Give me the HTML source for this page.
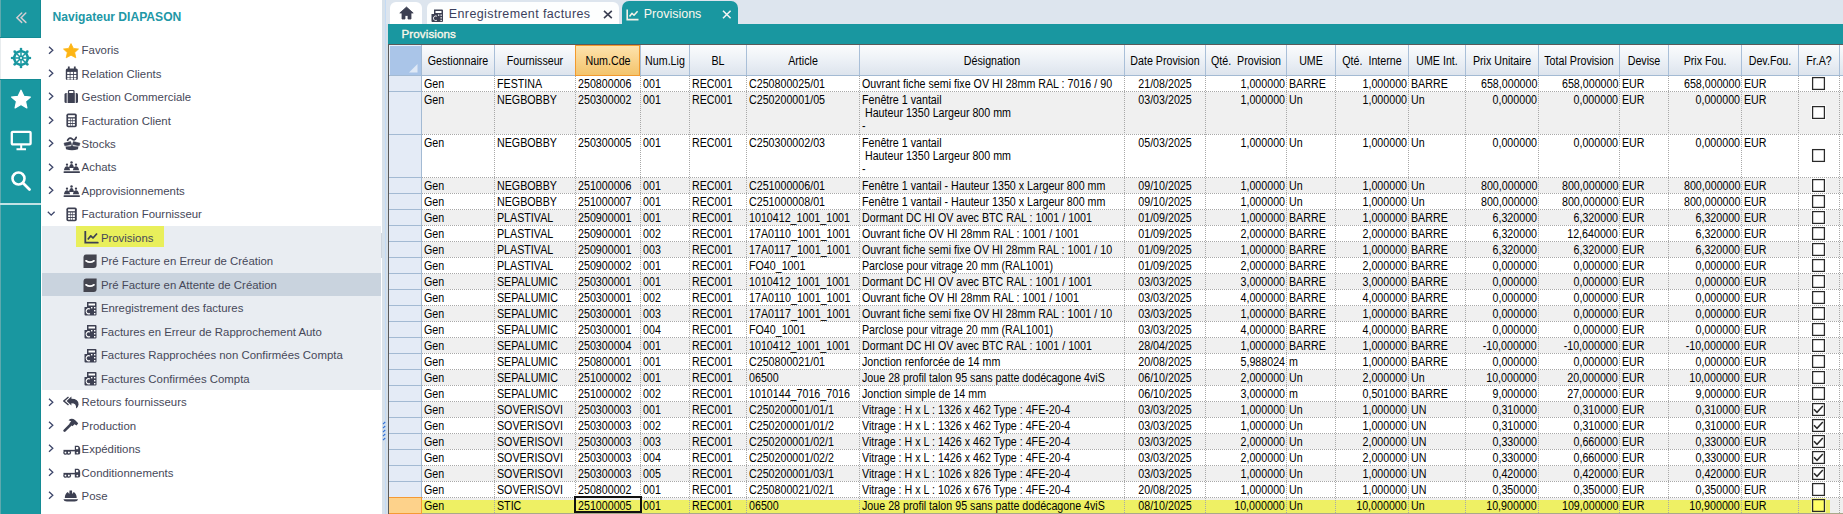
<!DOCTYPE html><html><head><meta charset="utf-8"><style>*{margin:0;padding:0;box-sizing:border-box}
html,body{width:1843px;height:514px;overflow:hidden;background:#fff}
body{position:relative;font-family:"Liberation Sans",sans-serif}
.a{position:absolute}
.t{position:absolute;white-space:pre;font-size:12px;line-height:13px;color:#000}
.c{position:absolute;overflow:hidden}
.s{display:inline-block;white-space:pre;transform-origin:0 0}
.nav{position:absolute;white-space:pre;font-size:11.4px;color:#464859;line-height:14px}
</style></head><body><div class="a" style="left:382px;top:0;width:1461px;height:24px;background:#dde5ee"></div><div class="a" style="left:382px;top:0;width:3px;height:514px;background:#d7e1ea"></div><div class="a" style="left:385px;top:0;width:1px;height:514px;background:#c4dbf5"></div><div class="a" style="left:386px;top:24px;width:2px;height:490px;background:#d5dfe8"></div><div class="a" style="left:388px;top:24px;width:1455px;height:20px;background:#1997a0"></div><div class="a" style="left:401.5px;top:26.6px;font:11.6px/14px 'Liberation Sans',sans-serif;letter-spacing:0.1px;-webkit-text-stroke:0.35px #fbf7ea;color:#fbf7ea;white-space:pre">Provisions</div><div class="a" style="left:388px;top:44px;width:1455px;height:1px;background:#5a5a5a"></div><div class="a" style="left:388px;top:44px;width:1px;height:470px;background:#5a5a5a"></div><div class="a" style="left:389px;top:45px;width:1454px;height:30px;background:linear-gradient(#fbfcfd,#eef2f7 45%,#dde4ed)"></div><div class="a" style="left:389px;top:75px;width:1454px;height:1px;background:#a3bad3"></div><div class="a" style="left:389px;top:45px;width:32px;height:30px;background:#aac5e8;border-left:1px solid #e8f0fa;border-top:1px solid #e8f0fa"></div><svg class="a" style="left:409px;top:64px" width="9" height="9"><path d="M8.5 0 L8.5 8.5 L0 8.5 Z" fill="#dfe9f6"/></svg><div class="a" style="left:389px;top:76px;width:32px;height:438px;background:#e4ebf6"></div><div class="a" style="left:421px;top:45px;width:1px;height:469px;background:#a3bad3"></div><div class="a" style="left:575px;top:45px;width:65px;height:31px;background:linear-gradient(#fde3ad,#f9d38c 50%,#f3c46c);border:1px solid #f29a2e"></div><div class="a" style="left:494px;top:45px;width:1px;height:30px;background:#a9bfd8"></div><div class="a" style="left:640px;top:45px;width:1px;height:30px;background:#a9bfd8"></div><div class="a" style="left:689px;top:45px;width:1px;height:30px;background:#a9bfd8"></div><div class="a" style="left:746px;top:45px;width:1px;height:30px;background:#a9bfd8"></div><div class="a" style="left:859px;top:45px;width:1px;height:30px;background:#a9bfd8"></div><div class="a" style="left:1124px;top:45px;width:1px;height:30px;background:#a9bfd8"></div><div class="a" style="left:1205px;top:45px;width:1px;height:30px;background:#a9bfd8"></div><div class="a" style="left:1286px;top:45px;width:1px;height:30px;background:#a9bfd8"></div><div class="a" style="left:1335px;top:45px;width:1px;height:30px;background:#a9bfd8"></div><div class="a" style="left:1408px;top:45px;width:1px;height:30px;background:#a9bfd8"></div><div class="a" style="left:1465px;top:45px;width:1px;height:30px;background:#a9bfd8"></div><div class="a" style="left:1538px;top:45px;width:1px;height:30px;background:#a9bfd8"></div><div class="a" style="left:1619px;top:45px;width:1px;height:30px;background:#a9bfd8"></div><div class="a" style="left:1668px;top:45px;width:1px;height:30px;background:#a9bfd8"></div><div class="a" style="left:1741px;top:45px;width:1px;height:30px;background:#a9bfd8"></div><div class="a" style="left:1798px;top:45px;width:1px;height:30px;background:#a9bfd8"></div><div class="a" style="left:1839px;top:45px;width:1px;height:30px;background:#a9bfd8"></div><div class="a" style="left:1840px;top:45px;width:3px;height:30px;background:linear-gradient(#fbfcfd,#dde4ed)"></div><div class="c" style="left:422px;top:45px;width:72px;height:30px"><div class="t" style="left:0;width:80.89887640449439px;top:9.5px;text-align:center;transform:scaleX(0.89);transform-origin:0 0">Gestionnaire</div></div><div class="c" style="left:495px;top:45px;width:80px;height:30px"><div class="t" style="left:0;width:89.8876404494382px;top:9.5px;text-align:center;transform:scaleX(0.89);transform-origin:0 0">Fournisseur</div></div><div class="c" style="left:576px;top:45px;width:64px;height:30px"><div class="t" style="left:0;width:71.91011235955057px;top:9.5px;text-align:center;transform:scaleX(0.89);transform-origin:0 0">Num.Cde</div></div><div class="c" style="left:641px;top:45px;width:48px;height:30px"><div class="t" style="left:0;width:53.93258426966292px;top:9.5px;text-align:center;transform:scaleX(0.89);transform-origin:0 0">Num.Lig</div></div><div class="c" style="left:690px;top:45px;width:56px;height:30px"><div class="t" style="left:0;width:62.92134831460674px;top:9.5px;text-align:center;transform:scaleX(0.89);transform-origin:0 0">BL</div></div><div class="c" style="left:747px;top:45px;width:112px;height:30px"><div class="t" style="left:0;width:125.84269662921348px;top:9.5px;text-align:center;transform:scaleX(0.89);transform-origin:0 0">Article</div></div><div class="c" style="left:860px;top:45px;width:264px;height:30px"><div class="t" style="left:0;width:296.6292134831461px;top:9.5px;text-align:center;transform:scaleX(0.89);transform-origin:0 0">Désignation</div></div><div class="c" style="left:1125px;top:45px;width:80px;height:30px"><div class="t" style="left:0;width:89.8876404494382px;top:9.5px;text-align:center;transform:scaleX(0.89);transform-origin:0 0">Date Provision</div></div><div class="c" style="left:1206px;top:45px;width:80px;height:30px"><div class="t" style="left:0;width:89.8876404494382px;top:9.5px;text-align:center;transform:scaleX(0.89);transform-origin:0 0">Qté.  Provision</div></div><div class="c" style="left:1287px;top:45px;width:48px;height:30px"><div class="t" style="left:0;width:53.93258426966292px;top:9.5px;text-align:center;transform:scaleX(0.89);transform-origin:0 0">UME</div></div><div class="c" style="left:1336px;top:45px;width:72px;height:30px"><div class="t" style="left:0;width:80.89887640449439px;top:9.5px;text-align:center;transform:scaleX(0.89);transform-origin:0 0">Qté.  Interne</div></div><div class="c" style="left:1409px;top:45px;width:56px;height:30px"><div class="t" style="left:0;width:62.92134831460674px;top:9.5px;text-align:center;transform:scaleX(0.89);transform-origin:0 0">UME Int.</div></div><div class="c" style="left:1466px;top:45px;width:72px;height:30px"><div class="t" style="left:0;width:80.89887640449439px;top:9.5px;text-align:center;transform:scaleX(0.89);transform-origin:0 0">Prix Unitaire</div></div><div class="c" style="left:1539px;top:45px;width:80px;height:30px"><div class="t" style="left:0;width:89.8876404494382px;top:9.5px;text-align:center;transform:scaleX(0.89);transform-origin:0 0">Total Provision</div></div><div class="c" style="left:1620px;top:45px;width:48px;height:30px"><div class="t" style="left:0;width:53.93258426966292px;top:9.5px;text-align:center;transform:scaleX(0.89);transform-origin:0 0">Devise</div></div><div class="c" style="left:1669px;top:45px;width:72px;height:30px"><div class="t" style="left:0;width:80.89887640449439px;top:9.5px;text-align:center;transform:scaleX(0.89);transform-origin:0 0">Prix Fou.</div></div><div class="c" style="left:1742px;top:45px;width:56px;height:30px"><div class="t" style="left:0;width:62.92134831460674px;top:9.5px;text-align:center;transform:scaleX(0.89);transform-origin:0 0">Dev.Fou.</div></div><div class="c" style="left:1799px;top:45px;width:40px;height:30px"><div class="t" style="left:0;width:44.9438202247191px;top:9.5px;text-align:center;transform:scaleX(0.89);transform-origin:0 0">Fr.A?</div></div><div class="a" style="left:422px;top:76px;width:1421px;height:15px;background:#ffffff"></div><div class="a" style="left:422px;top:91px;width:1421px;height:1px;background:repeating-linear-gradient(90deg,#a8a8a8 0 1px,transparent 1px 2px)"></div><div class="a" style="left:389px;top:91px;width:32px;height:1px;background:#a3bad3"></div><div class="a" style="left:422px;top:92px;width:1421px;height:42px;background:#f0f0f0"></div><div class="a" style="left:422px;top:134px;width:1421px;height:1px;background:repeating-linear-gradient(90deg,#a8a8a8 0 1px,transparent 1px 2px)"></div><div class="a" style="left:389px;top:134px;width:32px;height:1px;background:#a3bad3"></div><div class="a" style="left:422px;top:135px;width:1421px;height:42px;background:#ffffff"></div><div class="a" style="left:422px;top:177px;width:1421px;height:1px;background:repeating-linear-gradient(90deg,#a8a8a8 0 1px,transparent 1px 2px)"></div><div class="a" style="left:389px;top:177px;width:32px;height:1px;background:#a3bad3"></div><div class="a" style="left:422px;top:178px;width:1421px;height:15px;background:#f0f0f0"></div><div class="a" style="left:422px;top:193px;width:1421px;height:1px;background:repeating-linear-gradient(90deg,#a8a8a8 0 1px,transparent 1px 2px)"></div><div class="a" style="left:389px;top:193px;width:32px;height:1px;background:#a3bad3"></div><div class="a" style="left:422px;top:194px;width:1421px;height:15px;background:#ffffff"></div><div class="a" style="left:422px;top:209px;width:1421px;height:1px;background:repeating-linear-gradient(90deg,#a8a8a8 0 1px,transparent 1px 2px)"></div><div class="a" style="left:389px;top:209px;width:32px;height:1px;background:#a3bad3"></div><div class="a" style="left:422px;top:210px;width:1421px;height:15px;background:#f0f0f0"></div><div class="a" style="left:422px;top:225px;width:1421px;height:1px;background:repeating-linear-gradient(90deg,#a8a8a8 0 1px,transparent 1px 2px)"></div><div class="a" style="left:389px;top:225px;width:32px;height:1px;background:#a3bad3"></div><div class="a" style="left:422px;top:226px;width:1421px;height:15px;background:#ffffff"></div><div class="a" style="left:422px;top:241px;width:1421px;height:1px;background:repeating-linear-gradient(90deg,#a8a8a8 0 1px,transparent 1px 2px)"></div><div class="a" style="left:389px;top:241px;width:32px;height:1px;background:#a3bad3"></div><div class="a" style="left:422px;top:242px;width:1421px;height:15px;background:#f0f0f0"></div><div class="a" style="left:422px;top:257px;width:1421px;height:1px;background:repeating-linear-gradient(90deg,#a8a8a8 0 1px,transparent 1px 2px)"></div><div class="a" style="left:389px;top:257px;width:32px;height:1px;background:#a3bad3"></div><div class="a" style="left:422px;top:258px;width:1421px;height:15px;background:#ffffff"></div><div class="a" style="left:422px;top:273px;width:1421px;height:1px;background:repeating-linear-gradient(90deg,#a8a8a8 0 1px,transparent 1px 2px)"></div><div class="a" style="left:389px;top:273px;width:32px;height:1px;background:#a3bad3"></div><div class="a" style="left:422px;top:274px;width:1421px;height:15px;background:#f0f0f0"></div><div class="a" style="left:422px;top:289px;width:1421px;height:1px;background:repeating-linear-gradient(90deg,#a8a8a8 0 1px,transparent 1px 2px)"></div><div class="a" style="left:389px;top:289px;width:32px;height:1px;background:#a3bad3"></div><div class="a" style="left:422px;top:290px;width:1421px;height:15px;background:#ffffff"></div><div class="a" style="left:422px;top:305px;width:1421px;height:1px;background:repeating-linear-gradient(90deg,#a8a8a8 0 1px,transparent 1px 2px)"></div><div class="a" style="left:389px;top:305px;width:32px;height:1px;background:#a3bad3"></div><div class="a" style="left:422px;top:306px;width:1421px;height:15px;background:#f0f0f0"></div><div class="a" style="left:422px;top:321px;width:1421px;height:1px;background:repeating-linear-gradient(90deg,#a8a8a8 0 1px,transparent 1px 2px)"></div><div class="a" style="left:389px;top:321px;width:32px;height:1px;background:#a3bad3"></div><div class="a" style="left:422px;top:322px;width:1421px;height:15px;background:#ffffff"></div><div class="a" style="left:422px;top:337px;width:1421px;height:1px;background:repeating-linear-gradient(90deg,#a8a8a8 0 1px,transparent 1px 2px)"></div><div class="a" style="left:389px;top:337px;width:32px;height:1px;background:#a3bad3"></div><div class="a" style="left:422px;top:338px;width:1421px;height:15px;background:#f0f0f0"></div><div class="a" style="left:422px;top:353px;width:1421px;height:1px;background:repeating-linear-gradient(90deg,#a8a8a8 0 1px,transparent 1px 2px)"></div><div class="a" style="left:389px;top:353px;width:32px;height:1px;background:#a3bad3"></div><div class="a" style="left:422px;top:354px;width:1421px;height:15px;background:#ffffff"></div><div class="a" style="left:422px;top:369px;width:1421px;height:1px;background:repeating-linear-gradient(90deg,#a8a8a8 0 1px,transparent 1px 2px)"></div><div class="a" style="left:389px;top:369px;width:32px;height:1px;background:#a3bad3"></div><div class="a" style="left:422px;top:370px;width:1421px;height:15px;background:#f0f0f0"></div><div class="a" style="left:422px;top:385px;width:1421px;height:1px;background:repeating-linear-gradient(90deg,#a8a8a8 0 1px,transparent 1px 2px)"></div><div class="a" style="left:389px;top:385px;width:32px;height:1px;background:#a3bad3"></div><div class="a" style="left:422px;top:386px;width:1421px;height:15px;background:#ffffff"></div><div class="a" style="left:422px;top:401px;width:1421px;height:1px;background:repeating-linear-gradient(90deg,#a8a8a8 0 1px,transparent 1px 2px)"></div><div class="a" style="left:389px;top:401px;width:32px;height:1px;background:#a3bad3"></div><div class="a" style="left:422px;top:402px;width:1421px;height:15px;background:#f0f0f0"></div><div class="a" style="left:422px;top:417px;width:1421px;height:1px;background:repeating-linear-gradient(90deg,#a8a8a8 0 1px,transparent 1px 2px)"></div><div class="a" style="left:389px;top:417px;width:32px;height:1px;background:#a3bad3"></div><div class="a" style="left:422px;top:418px;width:1421px;height:15px;background:#ffffff"></div><div class="a" style="left:422px;top:433px;width:1421px;height:1px;background:repeating-linear-gradient(90deg,#a8a8a8 0 1px,transparent 1px 2px)"></div><div class="a" style="left:389px;top:433px;width:32px;height:1px;background:#a3bad3"></div><div class="a" style="left:422px;top:434px;width:1421px;height:15px;background:#f0f0f0"></div><div class="a" style="left:422px;top:449px;width:1421px;height:1px;background:repeating-linear-gradient(90deg,#a8a8a8 0 1px,transparent 1px 2px)"></div><div class="a" style="left:389px;top:449px;width:32px;height:1px;background:#a3bad3"></div><div class="a" style="left:422px;top:450px;width:1421px;height:15px;background:#ffffff"></div><div class="a" style="left:422px;top:465px;width:1421px;height:1px;background:repeating-linear-gradient(90deg,#a8a8a8 0 1px,transparent 1px 2px)"></div><div class="a" style="left:389px;top:465px;width:32px;height:1px;background:#a3bad3"></div><div class="a" style="left:422px;top:466px;width:1421px;height:15px;background:#f0f0f0"></div><div class="a" style="left:422px;top:481px;width:1421px;height:1px;background:repeating-linear-gradient(90deg,#a8a8a8 0 1px,transparent 1px 2px)"></div><div class="a" style="left:389px;top:481px;width:32px;height:1px;background:#a3bad3"></div><div class="a" style="left:422px;top:482px;width:1421px;height:15px;background:#ffffff"></div><div class="a" style="left:422px;top:497px;width:1421px;height:1px;background:repeating-linear-gradient(90deg,#a8a8a8 0 1px,transparent 1px 2px)"></div><div class="a" style="left:389px;top:497px;width:32px;height:1px;background:#a3bad3"></div><div class="a" style="left:422px;top:498px;width:1421px;height:16px;background:#efefef"></div><div class="a" style="left:422px;top:500px;width:1408px;height:13px;background:#eef064"></div><div class="a" style="left:422px;top:513px;width:1421px;height:1px;background:#a9a98a"></div><div class="a" style="left:389px;top:497px;width:33px;height:17px;background:#fdd28b;border:1px solid #f59a34;border-left:none"></div><div class="a" style="left:494px;top:76px;width:1px;height:438px;background:repeating-linear-gradient(180deg,#a8a8a8 0 1px,transparent 1px 2px)"></div><div class="a" style="left:575px;top:76px;width:1px;height:438px;background:repeating-linear-gradient(180deg,#a8a8a8 0 1px,transparent 1px 2px)"></div><div class="a" style="left:640px;top:76px;width:1px;height:438px;background:repeating-linear-gradient(180deg,#a8a8a8 0 1px,transparent 1px 2px)"></div><div class="a" style="left:689px;top:76px;width:1px;height:438px;background:repeating-linear-gradient(180deg,#a8a8a8 0 1px,transparent 1px 2px)"></div><div class="a" style="left:746px;top:76px;width:1px;height:438px;background:repeating-linear-gradient(180deg,#a8a8a8 0 1px,transparent 1px 2px)"></div><div class="a" style="left:859px;top:76px;width:1px;height:438px;background:repeating-linear-gradient(180deg,#a8a8a8 0 1px,transparent 1px 2px)"></div><div class="a" style="left:1124px;top:76px;width:1px;height:438px;background:repeating-linear-gradient(180deg,#a8a8a8 0 1px,transparent 1px 2px)"></div><div class="a" style="left:1205px;top:76px;width:1px;height:438px;background:repeating-linear-gradient(180deg,#a8a8a8 0 1px,transparent 1px 2px)"></div><div class="a" style="left:1286px;top:76px;width:1px;height:438px;background:repeating-linear-gradient(180deg,#a8a8a8 0 1px,transparent 1px 2px)"></div><div class="a" style="left:1335px;top:76px;width:1px;height:438px;background:repeating-linear-gradient(180deg,#a8a8a8 0 1px,transparent 1px 2px)"></div><div class="a" style="left:1408px;top:76px;width:1px;height:438px;background:repeating-linear-gradient(180deg,#a8a8a8 0 1px,transparent 1px 2px)"></div><div class="a" style="left:1465px;top:76px;width:1px;height:438px;background:repeating-linear-gradient(180deg,#a8a8a8 0 1px,transparent 1px 2px)"></div><div class="a" style="left:1538px;top:76px;width:1px;height:438px;background:repeating-linear-gradient(180deg,#a8a8a8 0 1px,transparent 1px 2px)"></div><div class="a" style="left:1619px;top:76px;width:1px;height:438px;background:repeating-linear-gradient(180deg,#a8a8a8 0 1px,transparent 1px 2px)"></div><div class="a" style="left:1668px;top:76px;width:1px;height:438px;background:repeating-linear-gradient(180deg,#a8a8a8 0 1px,transparent 1px 2px)"></div><div class="a" style="left:1741px;top:76px;width:1px;height:438px;background:repeating-linear-gradient(180deg,#a8a8a8 0 1px,transparent 1px 2px)"></div><div class="a" style="left:1798px;top:76px;width:1px;height:438px;background:repeating-linear-gradient(180deg,#a8a8a8 0 1px,transparent 1px 2px)"></div><div class="a" style="left:1839px;top:76px;width:1px;height:438px;background:repeating-linear-gradient(180deg,#a8a8a8 0 1px,transparent 1px 2px)"></div><div class="c" style="left:422px;top:76px;width:72px;height:15px"><div class="t" style="left:2px;top:2.4px;transform:scaleX(0.89);transform-origin:0 0">Gen</div></div><div class="c" style="left:495px;top:76px;width:80px;height:15px"><div class="t" style="left:2px;top:2.4px;transform:scaleX(0.89);transform-origin:0 0">FESTINA</div></div><div class="c" style="left:576px;top:76px;width:64px;height:15px"><div class="t" style="left:2px;top:2.4px;transform:scaleX(0.89);transform-origin:0 0">250800006</div></div><div class="c" style="left:641px;top:76px;width:48px;height:15px"><div class="t" style="left:2px;top:2.4px;transform:scaleX(0.89);transform-origin:0 0">001</div></div><div class="c" style="left:690px;top:76px;width:56px;height:15px"><div class="t" style="left:2px;top:2.4px;transform:scaleX(0.89);transform-origin:0 0">REC001</div></div><div class="c" style="left:747px;top:76px;width:112px;height:15px"><div class="t" style="left:2px;top:2.4px;transform:scaleX(0.89);transform-origin:0 0">C250800025/01</div></div><div class="c" style="left:860px;top:76px;width:264px;height:15px"><div class="t" style="left:2px;top:2.4px;transform:scaleX(0.89);transform-origin:0 0">Ouvrant fiche semi fixe OV HI 28mm RAL : 7016 / 90</div></div><div class="c" style="left:1125px;top:76px;width:80px;height:15px"><div class="t" style="left:0;width:80px;top:2.4px;text-align:center;transform:scaleX(0.89);transform-origin:50% 0">21/08/2025</div></div><div class="c" style="left:1206px;top:76px;width:80px;height:15px"><div class="t" style="right:1px;top:2.4px;transform:scaleX(0.89);transform-origin:100% 0">1,000000</div></div><div class="c" style="left:1287px;top:76px;width:48px;height:15px"><div class="t" style="left:2px;top:2.4px;transform:scaleX(0.89);transform-origin:0 0">BARRE</div></div><div class="c" style="left:1336px;top:76px;width:72px;height:15px"><div class="t" style="right:1px;top:2.4px;transform:scaleX(0.89);transform-origin:100% 0">1,000000</div></div><div class="c" style="left:1409px;top:76px;width:56px;height:15px"><div class="t" style="left:2px;top:2.4px;transform:scaleX(0.89);transform-origin:0 0">BARRE</div></div><div class="c" style="left:1466px;top:76px;width:72px;height:15px"><div class="t" style="right:1px;top:2.4px;transform:scaleX(0.89);transform-origin:100% 0">658,000000</div></div><div class="c" style="left:1539px;top:76px;width:80px;height:15px"><div class="t" style="right:1px;top:2.4px;transform:scaleX(0.89);transform-origin:100% 0">658,000000</div></div><div class="c" style="left:1620px;top:76px;width:48px;height:15px"><div class="t" style="left:2px;top:2.4px;transform:scaleX(0.89);transform-origin:0 0">EUR</div></div><div class="c" style="left:1669px;top:76px;width:72px;height:15px"><div class="t" style="right:1px;top:2.4px;transform:scaleX(0.89);transform-origin:100% 0">658,000000</div></div><div class="c" style="left:1742px;top:76px;width:56px;height:15px"><div class="t" style="left:2px;top:2.4px;transform:scaleX(0.89);transform-origin:0 0">EUR</div></div><svg class="a" style="left:1811px;top:76px" width="15" height="15"><rect x="0" y="0" width="15" height="15" fill="#fff"/><rect x="1.6" y="1.6" width="11.8" height="11.8" fill="#fff" stroke="#2a2a2a" stroke-width="1.25"/></svg><div class="c" style="left:422px;top:92px;width:72px;height:42px"><div class="t" style="left:2px;top:2.4px;transform:scaleX(0.89);transform-origin:0 0">Gen</div></div><div class="c" style="left:495px;top:92px;width:80px;height:42px"><div class="t" style="left:2px;top:2.4px;transform:scaleX(0.89);transform-origin:0 0">NEGBOBBY</div></div><div class="c" style="left:576px;top:92px;width:64px;height:42px"><div class="t" style="left:2px;top:2.4px;transform:scaleX(0.89);transform-origin:0 0">250300002</div></div><div class="c" style="left:641px;top:92px;width:48px;height:42px"><div class="t" style="left:2px;top:2.4px;transform:scaleX(0.89);transform-origin:0 0">001</div></div><div class="c" style="left:690px;top:92px;width:56px;height:42px"><div class="t" style="left:2px;top:2.4px;transform:scaleX(0.89);transform-origin:0 0">REC001</div></div><div class="c" style="left:747px;top:92px;width:112px;height:42px"><div class="t" style="left:2px;top:2.4px;transform:scaleX(0.89);transform-origin:0 0">C250200001/05</div></div><div class="c" style="left:860px;top:92px;width:264px;height:42px"><div class="t" style="left:2px;top:2.4px;transform:scaleX(0.89);transform-origin:0 0">Fenêtre 1 vantail
 Hauteur 1350 Largeur 800 mm
-</div></div><div class="c" style="left:1125px;top:92px;width:80px;height:42px"><div class="t" style="left:0;width:80px;top:2.4px;text-align:center;transform:scaleX(0.89);transform-origin:50% 0">03/03/2025</div></div><div class="c" style="left:1206px;top:92px;width:80px;height:42px"><div class="t" style="right:1px;top:2.4px;transform:scaleX(0.89);transform-origin:100% 0">1,000000</div></div><div class="c" style="left:1287px;top:92px;width:48px;height:42px"><div class="t" style="left:2px;top:2.4px;transform:scaleX(0.89);transform-origin:0 0">Un</div></div><div class="c" style="left:1336px;top:92px;width:72px;height:42px"><div class="t" style="right:1px;top:2.4px;transform:scaleX(0.89);transform-origin:100% 0">1,000000</div></div><div class="c" style="left:1409px;top:92px;width:56px;height:42px"><div class="t" style="left:2px;top:2.4px;transform:scaleX(0.89);transform-origin:0 0">Un</div></div><div class="c" style="left:1466px;top:92px;width:72px;height:42px"><div class="t" style="right:1px;top:2.4px;transform:scaleX(0.89);transform-origin:100% 0">0,000000</div></div><div class="c" style="left:1539px;top:92px;width:80px;height:42px"><div class="t" style="right:1px;top:2.4px;transform:scaleX(0.89);transform-origin:100% 0">0,000000</div></div><div class="c" style="left:1620px;top:92px;width:48px;height:42px"><div class="t" style="left:2px;top:2.4px;transform:scaleX(0.89);transform-origin:0 0">EUR</div></div><div class="c" style="left:1669px;top:92px;width:72px;height:42px"><div class="t" style="right:1px;top:2.4px;transform:scaleX(0.89);transform-origin:100% 0">0,000000</div></div><div class="c" style="left:1742px;top:92px;width:56px;height:42px"><div class="t" style="left:2px;top:2.4px;transform:scaleX(0.89);transform-origin:0 0">EUR</div></div><svg class="a" style="left:1811px;top:105px" width="15" height="15"><rect x="0" y="0" width="15" height="15" fill="#fff"/><rect x="1.6" y="1.6" width="11.8" height="11.8" fill="#fff" stroke="#2a2a2a" stroke-width="1.25"/></svg><div class="c" style="left:422px;top:135px;width:72px;height:42px"><div class="t" style="left:2px;top:2.4px;transform:scaleX(0.89);transform-origin:0 0">Gen</div></div><div class="c" style="left:495px;top:135px;width:80px;height:42px"><div class="t" style="left:2px;top:2.4px;transform:scaleX(0.89);transform-origin:0 0">NEGBOBBY</div></div><div class="c" style="left:576px;top:135px;width:64px;height:42px"><div class="t" style="left:2px;top:2.4px;transform:scaleX(0.89);transform-origin:0 0">250300005</div></div><div class="c" style="left:641px;top:135px;width:48px;height:42px"><div class="t" style="left:2px;top:2.4px;transform:scaleX(0.89);transform-origin:0 0">001</div></div><div class="c" style="left:690px;top:135px;width:56px;height:42px"><div class="t" style="left:2px;top:2.4px;transform:scaleX(0.89);transform-origin:0 0">REC001</div></div><div class="c" style="left:747px;top:135px;width:112px;height:42px"><div class="t" style="left:2px;top:2.4px;transform:scaleX(0.89);transform-origin:0 0">C250300002/03</div></div><div class="c" style="left:860px;top:135px;width:264px;height:42px"><div class="t" style="left:2px;top:2.4px;transform:scaleX(0.89);transform-origin:0 0">Fenêtre 1 vantail
 Hauteur 1350 Largeur 800 mm
-</div></div><div class="c" style="left:1125px;top:135px;width:80px;height:42px"><div class="t" style="left:0;width:80px;top:2.4px;text-align:center;transform:scaleX(0.89);transform-origin:50% 0">05/03/2025</div></div><div class="c" style="left:1206px;top:135px;width:80px;height:42px"><div class="t" style="right:1px;top:2.4px;transform:scaleX(0.89);transform-origin:100% 0">1,000000</div></div><div class="c" style="left:1287px;top:135px;width:48px;height:42px"><div class="t" style="left:2px;top:2.4px;transform:scaleX(0.89);transform-origin:0 0">Un</div></div><div class="c" style="left:1336px;top:135px;width:72px;height:42px"><div class="t" style="right:1px;top:2.4px;transform:scaleX(0.89);transform-origin:100% 0">1,000000</div></div><div class="c" style="left:1409px;top:135px;width:56px;height:42px"><div class="t" style="left:2px;top:2.4px;transform:scaleX(0.89);transform-origin:0 0">Un</div></div><div class="c" style="left:1466px;top:135px;width:72px;height:42px"><div class="t" style="right:1px;top:2.4px;transform:scaleX(0.89);transform-origin:100% 0">0,000000</div></div><div class="c" style="left:1539px;top:135px;width:80px;height:42px"><div class="t" style="right:1px;top:2.4px;transform:scaleX(0.89);transform-origin:100% 0">0,000000</div></div><div class="c" style="left:1620px;top:135px;width:48px;height:42px"><div class="t" style="left:2px;top:2.4px;transform:scaleX(0.89);transform-origin:0 0">EUR</div></div><div class="c" style="left:1669px;top:135px;width:72px;height:42px"><div class="t" style="right:1px;top:2.4px;transform:scaleX(0.89);transform-origin:100% 0">0,000000</div></div><div class="c" style="left:1742px;top:135px;width:56px;height:42px"><div class="t" style="left:2px;top:2.4px;transform:scaleX(0.89);transform-origin:0 0">EUR</div></div><svg class="a" style="left:1811px;top:148px" width="15" height="15"><rect x="0" y="0" width="15" height="15" fill="#fff"/><rect x="1.6" y="1.6" width="11.8" height="11.8" fill="#fff" stroke="#2a2a2a" stroke-width="1.25"/></svg><div class="c" style="left:422px;top:178px;width:72px;height:15px"><div class="t" style="left:2px;top:2.4px;transform:scaleX(0.89);transform-origin:0 0">Gen</div></div><div class="c" style="left:495px;top:178px;width:80px;height:15px"><div class="t" style="left:2px;top:2.4px;transform:scaleX(0.89);transform-origin:0 0">NEGBOBBY</div></div><div class="c" style="left:576px;top:178px;width:64px;height:15px"><div class="t" style="left:2px;top:2.4px;transform:scaleX(0.89);transform-origin:0 0">251000006</div></div><div class="c" style="left:641px;top:178px;width:48px;height:15px"><div class="t" style="left:2px;top:2.4px;transform:scaleX(0.89);transform-origin:0 0">001</div></div><div class="c" style="left:690px;top:178px;width:56px;height:15px"><div class="t" style="left:2px;top:2.4px;transform:scaleX(0.89);transform-origin:0 0">REC001</div></div><div class="c" style="left:747px;top:178px;width:112px;height:15px"><div class="t" style="left:2px;top:2.4px;transform:scaleX(0.89);transform-origin:0 0">C251000006/01</div></div><div class="c" style="left:860px;top:178px;width:264px;height:15px"><div class="t" style="left:2px;top:2.4px;transform:scaleX(0.89);transform-origin:0 0">Fenêtre 1 vantail - Hauteur 1350 x Largeur 800 mm</div></div><div class="c" style="left:1125px;top:178px;width:80px;height:15px"><div class="t" style="left:0;width:80px;top:2.4px;text-align:center;transform:scaleX(0.89);transform-origin:50% 0">09/10/2025</div></div><div class="c" style="left:1206px;top:178px;width:80px;height:15px"><div class="t" style="right:1px;top:2.4px;transform:scaleX(0.89);transform-origin:100% 0">1,000000</div></div><div class="c" style="left:1287px;top:178px;width:48px;height:15px"><div class="t" style="left:2px;top:2.4px;transform:scaleX(0.89);transform-origin:0 0">Un</div></div><div class="c" style="left:1336px;top:178px;width:72px;height:15px"><div class="t" style="right:1px;top:2.4px;transform:scaleX(0.89);transform-origin:100% 0">1,000000</div></div><div class="c" style="left:1409px;top:178px;width:56px;height:15px"><div class="t" style="left:2px;top:2.4px;transform:scaleX(0.89);transform-origin:0 0">Un</div></div><div class="c" style="left:1466px;top:178px;width:72px;height:15px"><div class="t" style="right:1px;top:2.4px;transform:scaleX(0.89);transform-origin:100% 0">800,000000</div></div><div class="c" style="left:1539px;top:178px;width:80px;height:15px"><div class="t" style="right:1px;top:2.4px;transform:scaleX(0.89);transform-origin:100% 0">800,000000</div></div><div class="c" style="left:1620px;top:178px;width:48px;height:15px"><div class="t" style="left:2px;top:2.4px;transform:scaleX(0.89);transform-origin:0 0">EUR</div></div><div class="c" style="left:1669px;top:178px;width:72px;height:15px"><div class="t" style="right:1px;top:2.4px;transform:scaleX(0.89);transform-origin:100% 0">800,000000</div></div><div class="c" style="left:1742px;top:178px;width:56px;height:15px"><div class="t" style="left:2px;top:2.4px;transform:scaleX(0.89);transform-origin:0 0">EUR</div></div><svg class="a" style="left:1811px;top:178px" width="15" height="15"><rect x="0" y="0" width="15" height="15" fill="#fff"/><rect x="1.6" y="1.6" width="11.8" height="11.8" fill="#fff" stroke="#2a2a2a" stroke-width="1.25"/></svg><div class="c" style="left:422px;top:194px;width:72px;height:15px"><div class="t" style="left:2px;top:2.4px;transform:scaleX(0.89);transform-origin:0 0">Gen</div></div><div class="c" style="left:495px;top:194px;width:80px;height:15px"><div class="t" style="left:2px;top:2.4px;transform:scaleX(0.89);transform-origin:0 0">NEGBOBBY</div></div><div class="c" style="left:576px;top:194px;width:64px;height:15px"><div class="t" style="left:2px;top:2.4px;transform:scaleX(0.89);transform-origin:0 0">251000007</div></div><div class="c" style="left:641px;top:194px;width:48px;height:15px"><div class="t" style="left:2px;top:2.4px;transform:scaleX(0.89);transform-origin:0 0">001</div></div><div class="c" style="left:690px;top:194px;width:56px;height:15px"><div class="t" style="left:2px;top:2.4px;transform:scaleX(0.89);transform-origin:0 0">REC001</div></div><div class="c" style="left:747px;top:194px;width:112px;height:15px"><div class="t" style="left:2px;top:2.4px;transform:scaleX(0.89);transform-origin:0 0">C251000008/01</div></div><div class="c" style="left:860px;top:194px;width:264px;height:15px"><div class="t" style="left:2px;top:2.4px;transform:scaleX(0.89);transform-origin:0 0">Fenêtre 1 vantail - Hauteur 1350 x Largeur 800 mm</div></div><div class="c" style="left:1125px;top:194px;width:80px;height:15px"><div class="t" style="left:0;width:80px;top:2.4px;text-align:center;transform:scaleX(0.89);transform-origin:50% 0">09/10/2025</div></div><div class="c" style="left:1206px;top:194px;width:80px;height:15px"><div class="t" style="right:1px;top:2.4px;transform:scaleX(0.89);transform-origin:100% 0">1,000000</div></div><div class="c" style="left:1287px;top:194px;width:48px;height:15px"><div class="t" style="left:2px;top:2.4px;transform:scaleX(0.89);transform-origin:0 0">Un</div></div><div class="c" style="left:1336px;top:194px;width:72px;height:15px"><div class="t" style="right:1px;top:2.4px;transform:scaleX(0.89);transform-origin:100% 0">1,000000</div></div><div class="c" style="left:1409px;top:194px;width:56px;height:15px"><div class="t" style="left:2px;top:2.4px;transform:scaleX(0.89);transform-origin:0 0">Un</div></div><div class="c" style="left:1466px;top:194px;width:72px;height:15px"><div class="t" style="right:1px;top:2.4px;transform:scaleX(0.89);transform-origin:100% 0">800,000000</div></div><div class="c" style="left:1539px;top:194px;width:80px;height:15px"><div class="t" style="right:1px;top:2.4px;transform:scaleX(0.89);transform-origin:100% 0">800,000000</div></div><div class="c" style="left:1620px;top:194px;width:48px;height:15px"><div class="t" style="left:2px;top:2.4px;transform:scaleX(0.89);transform-origin:0 0">EUR</div></div><div class="c" style="left:1669px;top:194px;width:72px;height:15px"><div class="t" style="right:1px;top:2.4px;transform:scaleX(0.89);transform-origin:100% 0">800,000000</div></div><div class="c" style="left:1742px;top:194px;width:56px;height:15px"><div class="t" style="left:2px;top:2.4px;transform:scaleX(0.89);transform-origin:0 0">EUR</div></div><svg class="a" style="left:1811px;top:194px" width="15" height="15"><rect x="0" y="0" width="15" height="15" fill="#fff"/><rect x="1.6" y="1.6" width="11.8" height="11.8" fill="#fff" stroke="#2a2a2a" stroke-width="1.25"/></svg><div class="c" style="left:422px;top:210px;width:72px;height:15px"><div class="t" style="left:2px;top:2.4px;transform:scaleX(0.89);transform-origin:0 0">Gen</div></div><div class="c" style="left:495px;top:210px;width:80px;height:15px"><div class="t" style="left:2px;top:2.4px;transform:scaleX(0.89);transform-origin:0 0">PLASTIVAL</div></div><div class="c" style="left:576px;top:210px;width:64px;height:15px"><div class="t" style="left:2px;top:2.4px;transform:scaleX(0.89);transform-origin:0 0">250900001</div></div><div class="c" style="left:641px;top:210px;width:48px;height:15px"><div class="t" style="left:2px;top:2.4px;transform:scaleX(0.89);transform-origin:0 0">001</div></div><div class="c" style="left:690px;top:210px;width:56px;height:15px"><div class="t" style="left:2px;top:2.4px;transform:scaleX(0.89);transform-origin:0 0">REC001</div></div><div class="c" style="left:747px;top:210px;width:112px;height:15px"><div class="t" style="left:2px;top:2.4px;transform:scaleX(0.89);transform-origin:0 0">1010412_1001_1001</div></div><div class="c" style="left:860px;top:210px;width:264px;height:15px"><div class="t" style="left:2px;top:2.4px;transform:scaleX(0.89);transform-origin:0 0">Dormant DC HI OV avec BTC RAL : 1001 / 1001</div></div><div class="c" style="left:1125px;top:210px;width:80px;height:15px"><div class="t" style="left:0;width:80px;top:2.4px;text-align:center;transform:scaleX(0.89);transform-origin:50% 0">01/09/2025</div></div><div class="c" style="left:1206px;top:210px;width:80px;height:15px"><div class="t" style="right:1px;top:2.4px;transform:scaleX(0.89);transform-origin:100% 0">1,000000</div></div><div class="c" style="left:1287px;top:210px;width:48px;height:15px"><div class="t" style="left:2px;top:2.4px;transform:scaleX(0.89);transform-origin:0 0">BARRE</div></div><div class="c" style="left:1336px;top:210px;width:72px;height:15px"><div class="t" style="right:1px;top:2.4px;transform:scaleX(0.89);transform-origin:100% 0">1,000000</div></div><div class="c" style="left:1409px;top:210px;width:56px;height:15px"><div class="t" style="left:2px;top:2.4px;transform:scaleX(0.89);transform-origin:0 0">BARRE</div></div><div class="c" style="left:1466px;top:210px;width:72px;height:15px"><div class="t" style="right:1px;top:2.4px;transform:scaleX(0.89);transform-origin:100% 0">6,320000</div></div><div class="c" style="left:1539px;top:210px;width:80px;height:15px"><div class="t" style="right:1px;top:2.4px;transform:scaleX(0.89);transform-origin:100% 0">6,320000</div></div><div class="c" style="left:1620px;top:210px;width:48px;height:15px"><div class="t" style="left:2px;top:2.4px;transform:scaleX(0.89);transform-origin:0 0">EUR</div></div><div class="c" style="left:1669px;top:210px;width:72px;height:15px"><div class="t" style="right:1px;top:2.4px;transform:scaleX(0.89);transform-origin:100% 0">6,320000</div></div><div class="c" style="left:1742px;top:210px;width:56px;height:15px"><div class="t" style="left:2px;top:2.4px;transform:scaleX(0.89);transform-origin:0 0">EUR</div></div><svg class="a" style="left:1811px;top:210px" width="15" height="15"><rect x="0" y="0" width="15" height="15" fill="#fff"/><rect x="1.6" y="1.6" width="11.8" height="11.8" fill="#fff" stroke="#2a2a2a" stroke-width="1.25"/></svg><div class="c" style="left:422px;top:226px;width:72px;height:15px"><div class="t" style="left:2px;top:2.4px;transform:scaleX(0.89);transform-origin:0 0">Gen</div></div><div class="c" style="left:495px;top:226px;width:80px;height:15px"><div class="t" style="left:2px;top:2.4px;transform:scaleX(0.89);transform-origin:0 0">PLASTIVAL</div></div><div class="c" style="left:576px;top:226px;width:64px;height:15px"><div class="t" style="left:2px;top:2.4px;transform:scaleX(0.89);transform-origin:0 0">250900001</div></div><div class="c" style="left:641px;top:226px;width:48px;height:15px"><div class="t" style="left:2px;top:2.4px;transform:scaleX(0.89);transform-origin:0 0">002</div></div><div class="c" style="left:690px;top:226px;width:56px;height:15px"><div class="t" style="left:2px;top:2.4px;transform:scaleX(0.89);transform-origin:0 0">REC001</div></div><div class="c" style="left:747px;top:226px;width:112px;height:15px"><div class="t" style="left:2px;top:2.4px;transform:scaleX(0.89);transform-origin:0 0">17A0110_1001_1001</div></div><div class="c" style="left:860px;top:226px;width:264px;height:15px"><div class="t" style="left:2px;top:2.4px;transform:scaleX(0.89);transform-origin:0 0">Ouvrant fiche OV HI 28mm RAL : 1001 / 1001</div></div><div class="c" style="left:1125px;top:226px;width:80px;height:15px"><div class="t" style="left:0;width:80px;top:2.4px;text-align:center;transform:scaleX(0.89);transform-origin:50% 0">01/09/2025</div></div><div class="c" style="left:1206px;top:226px;width:80px;height:15px"><div class="t" style="right:1px;top:2.4px;transform:scaleX(0.89);transform-origin:100% 0">2,000000</div></div><div class="c" style="left:1287px;top:226px;width:48px;height:15px"><div class="t" style="left:2px;top:2.4px;transform:scaleX(0.89);transform-origin:0 0">BARRE</div></div><div class="c" style="left:1336px;top:226px;width:72px;height:15px"><div class="t" style="right:1px;top:2.4px;transform:scaleX(0.89);transform-origin:100% 0">2,000000</div></div><div class="c" style="left:1409px;top:226px;width:56px;height:15px"><div class="t" style="left:2px;top:2.4px;transform:scaleX(0.89);transform-origin:0 0">BARRE</div></div><div class="c" style="left:1466px;top:226px;width:72px;height:15px"><div class="t" style="right:1px;top:2.4px;transform:scaleX(0.89);transform-origin:100% 0">6,320000</div></div><div class="c" style="left:1539px;top:226px;width:80px;height:15px"><div class="t" style="right:1px;top:2.4px;transform:scaleX(0.89);transform-origin:100% 0">12,640000</div></div><div class="c" style="left:1620px;top:226px;width:48px;height:15px"><div class="t" style="left:2px;top:2.4px;transform:scaleX(0.89);transform-origin:0 0">EUR</div></div><div class="c" style="left:1669px;top:226px;width:72px;height:15px"><div class="t" style="right:1px;top:2.4px;transform:scaleX(0.89);transform-origin:100% 0">6,320000</div></div><div class="c" style="left:1742px;top:226px;width:56px;height:15px"><div class="t" style="left:2px;top:2.4px;transform:scaleX(0.89);transform-origin:0 0">EUR</div></div><svg class="a" style="left:1811px;top:226px" width="15" height="15"><rect x="0" y="0" width="15" height="15" fill="#fff"/><rect x="1.6" y="1.6" width="11.8" height="11.8" fill="#fff" stroke="#2a2a2a" stroke-width="1.25"/></svg><div class="c" style="left:422px;top:242px;width:72px;height:15px"><div class="t" style="left:2px;top:2.4px;transform:scaleX(0.89);transform-origin:0 0">Gen</div></div><div class="c" style="left:495px;top:242px;width:80px;height:15px"><div class="t" style="left:2px;top:2.4px;transform:scaleX(0.89);transform-origin:0 0">PLASTIVAL</div></div><div class="c" style="left:576px;top:242px;width:64px;height:15px"><div class="t" style="left:2px;top:2.4px;transform:scaleX(0.89);transform-origin:0 0">250900001</div></div><div class="c" style="left:641px;top:242px;width:48px;height:15px"><div class="t" style="left:2px;top:2.4px;transform:scaleX(0.89);transform-origin:0 0">003</div></div><div class="c" style="left:690px;top:242px;width:56px;height:15px"><div class="t" style="left:2px;top:2.4px;transform:scaleX(0.89);transform-origin:0 0">REC001</div></div><div class="c" style="left:747px;top:242px;width:112px;height:15px"><div class="t" style="left:2px;top:2.4px;transform:scaleX(0.89);transform-origin:0 0">17A0117_1001_1001</div></div><div class="c" style="left:860px;top:242px;width:264px;height:15px"><div class="t" style="left:2px;top:2.4px;transform:scaleX(0.89);transform-origin:0 0">Ouvrant fiche semi fixe OV HI 28mm RAL : 1001 / 10</div></div><div class="c" style="left:1125px;top:242px;width:80px;height:15px"><div class="t" style="left:0;width:80px;top:2.4px;text-align:center;transform:scaleX(0.89);transform-origin:50% 0">01/09/2025</div></div><div class="c" style="left:1206px;top:242px;width:80px;height:15px"><div class="t" style="right:1px;top:2.4px;transform:scaleX(0.89);transform-origin:100% 0">1,000000</div></div><div class="c" style="left:1287px;top:242px;width:48px;height:15px"><div class="t" style="left:2px;top:2.4px;transform:scaleX(0.89);transform-origin:0 0">BARRE</div></div><div class="c" style="left:1336px;top:242px;width:72px;height:15px"><div class="t" style="right:1px;top:2.4px;transform:scaleX(0.89);transform-origin:100% 0">1,000000</div></div><div class="c" style="left:1409px;top:242px;width:56px;height:15px"><div class="t" style="left:2px;top:2.4px;transform:scaleX(0.89);transform-origin:0 0">BARRE</div></div><div class="c" style="left:1466px;top:242px;width:72px;height:15px"><div class="t" style="right:1px;top:2.4px;transform:scaleX(0.89);transform-origin:100% 0">6,320000</div></div><div class="c" style="left:1539px;top:242px;width:80px;height:15px"><div class="t" style="right:1px;top:2.4px;transform:scaleX(0.89);transform-origin:100% 0">6,320000</div></div><div class="c" style="left:1620px;top:242px;width:48px;height:15px"><div class="t" style="left:2px;top:2.4px;transform:scaleX(0.89);transform-origin:0 0">EUR</div></div><div class="c" style="left:1669px;top:242px;width:72px;height:15px"><div class="t" style="right:1px;top:2.4px;transform:scaleX(0.89);transform-origin:100% 0">6,320000</div></div><div class="c" style="left:1742px;top:242px;width:56px;height:15px"><div class="t" style="left:2px;top:2.4px;transform:scaleX(0.89);transform-origin:0 0">EUR</div></div><svg class="a" style="left:1811px;top:242px" width="15" height="15"><rect x="0" y="0" width="15" height="15" fill="#fff"/><rect x="1.6" y="1.6" width="11.8" height="11.8" fill="#fff" stroke="#2a2a2a" stroke-width="1.25"/></svg><div class="c" style="left:422px;top:258px;width:72px;height:15px"><div class="t" style="left:2px;top:2.4px;transform:scaleX(0.89);transform-origin:0 0">Gen</div></div><div class="c" style="left:495px;top:258px;width:80px;height:15px"><div class="t" style="left:2px;top:2.4px;transform:scaleX(0.89);transform-origin:0 0">PLASTIVAL</div></div><div class="c" style="left:576px;top:258px;width:64px;height:15px"><div class="t" style="left:2px;top:2.4px;transform:scaleX(0.89);transform-origin:0 0">250900002</div></div><div class="c" style="left:641px;top:258px;width:48px;height:15px"><div class="t" style="left:2px;top:2.4px;transform:scaleX(0.89);transform-origin:0 0">001</div></div><div class="c" style="left:690px;top:258px;width:56px;height:15px"><div class="t" style="left:2px;top:2.4px;transform:scaleX(0.89);transform-origin:0 0">REC001</div></div><div class="c" style="left:747px;top:258px;width:112px;height:15px"><div class="t" style="left:2px;top:2.4px;transform:scaleX(0.89);transform-origin:0 0">FO40_1001</div></div><div class="c" style="left:860px;top:258px;width:264px;height:15px"><div class="t" style="left:2px;top:2.4px;transform:scaleX(0.89);transform-origin:0 0">Parclose pour vitrage 20 mm (RAL1001)</div></div><div class="c" style="left:1125px;top:258px;width:80px;height:15px"><div class="t" style="left:0;width:80px;top:2.4px;text-align:center;transform:scaleX(0.89);transform-origin:50% 0">01/09/2025</div></div><div class="c" style="left:1206px;top:258px;width:80px;height:15px"><div class="t" style="right:1px;top:2.4px;transform:scaleX(0.89);transform-origin:100% 0">2,000000</div></div><div class="c" style="left:1287px;top:258px;width:48px;height:15px"><div class="t" style="left:2px;top:2.4px;transform:scaleX(0.89);transform-origin:0 0">BARRE</div></div><div class="c" style="left:1336px;top:258px;width:72px;height:15px"><div class="t" style="right:1px;top:2.4px;transform:scaleX(0.89);transform-origin:100% 0">2,000000</div></div><div class="c" style="left:1409px;top:258px;width:56px;height:15px"><div class="t" style="left:2px;top:2.4px;transform:scaleX(0.89);transform-origin:0 0">BARRE</div></div><div class="c" style="left:1466px;top:258px;width:72px;height:15px"><div class="t" style="right:1px;top:2.4px;transform:scaleX(0.89);transform-origin:100% 0">0,000000</div></div><div class="c" style="left:1539px;top:258px;width:80px;height:15px"><div class="t" style="right:1px;top:2.4px;transform:scaleX(0.89);transform-origin:100% 0">0,000000</div></div><div class="c" style="left:1620px;top:258px;width:48px;height:15px"><div class="t" style="left:2px;top:2.4px;transform:scaleX(0.89);transform-origin:0 0">EUR</div></div><div class="c" style="left:1669px;top:258px;width:72px;height:15px"><div class="t" style="right:1px;top:2.4px;transform:scaleX(0.89);transform-origin:100% 0">0,000000</div></div><div class="c" style="left:1742px;top:258px;width:56px;height:15px"><div class="t" style="left:2px;top:2.4px;transform:scaleX(0.89);transform-origin:0 0">EUR</div></div><svg class="a" style="left:1811px;top:258px" width="15" height="15"><rect x="0" y="0" width="15" height="15" fill="#fff"/><rect x="1.6" y="1.6" width="11.8" height="11.8" fill="#fff" stroke="#2a2a2a" stroke-width="1.25"/></svg><div class="c" style="left:422px;top:274px;width:72px;height:15px"><div class="t" style="left:2px;top:2.4px;transform:scaleX(0.89);transform-origin:0 0">Gen</div></div><div class="c" style="left:495px;top:274px;width:80px;height:15px"><div class="t" style="left:2px;top:2.4px;transform:scaleX(0.89);transform-origin:0 0">SEPALUMIC</div></div><div class="c" style="left:576px;top:274px;width:64px;height:15px"><div class="t" style="left:2px;top:2.4px;transform:scaleX(0.89);transform-origin:0 0">250300001</div></div><div class="c" style="left:641px;top:274px;width:48px;height:15px"><div class="t" style="left:2px;top:2.4px;transform:scaleX(0.89);transform-origin:0 0">001</div></div><div class="c" style="left:690px;top:274px;width:56px;height:15px"><div class="t" style="left:2px;top:2.4px;transform:scaleX(0.89);transform-origin:0 0">REC001</div></div><div class="c" style="left:747px;top:274px;width:112px;height:15px"><div class="t" style="left:2px;top:2.4px;transform:scaleX(0.89);transform-origin:0 0">1010412_1001_1001</div></div><div class="c" style="left:860px;top:274px;width:264px;height:15px"><div class="t" style="left:2px;top:2.4px;transform:scaleX(0.89);transform-origin:0 0">Dormant DC HI OV avec BTC RAL : 1001 / 1001</div></div><div class="c" style="left:1125px;top:274px;width:80px;height:15px"><div class="t" style="left:0;width:80px;top:2.4px;text-align:center;transform:scaleX(0.89);transform-origin:50% 0">03/03/2025</div></div><div class="c" style="left:1206px;top:274px;width:80px;height:15px"><div class="t" style="right:1px;top:2.4px;transform:scaleX(0.89);transform-origin:100% 0">3,000000</div></div><div class="c" style="left:1287px;top:274px;width:48px;height:15px"><div class="t" style="left:2px;top:2.4px;transform:scaleX(0.89);transform-origin:0 0">BARRE</div></div><div class="c" style="left:1336px;top:274px;width:72px;height:15px"><div class="t" style="right:1px;top:2.4px;transform:scaleX(0.89);transform-origin:100% 0">3,000000</div></div><div class="c" style="left:1409px;top:274px;width:56px;height:15px"><div class="t" style="left:2px;top:2.4px;transform:scaleX(0.89);transform-origin:0 0">BARRE</div></div><div class="c" style="left:1466px;top:274px;width:72px;height:15px"><div class="t" style="right:1px;top:2.4px;transform:scaleX(0.89);transform-origin:100% 0">0,000000</div></div><div class="c" style="left:1539px;top:274px;width:80px;height:15px"><div class="t" style="right:1px;top:2.4px;transform:scaleX(0.89);transform-origin:100% 0">0,000000</div></div><div class="c" style="left:1620px;top:274px;width:48px;height:15px"><div class="t" style="left:2px;top:2.4px;transform:scaleX(0.89);transform-origin:0 0">EUR</div></div><div class="c" style="left:1669px;top:274px;width:72px;height:15px"><div class="t" style="right:1px;top:2.4px;transform:scaleX(0.89);transform-origin:100% 0">0,000000</div></div><div class="c" style="left:1742px;top:274px;width:56px;height:15px"><div class="t" style="left:2px;top:2.4px;transform:scaleX(0.89);transform-origin:0 0">EUR</div></div><svg class="a" style="left:1811px;top:274px" width="15" height="15"><rect x="0" y="0" width="15" height="15" fill="#fff"/><rect x="1.6" y="1.6" width="11.8" height="11.8" fill="#fff" stroke="#2a2a2a" stroke-width="1.25"/></svg><div class="c" style="left:422px;top:290px;width:72px;height:15px"><div class="t" style="left:2px;top:2.4px;transform:scaleX(0.89);transform-origin:0 0">Gen</div></div><div class="c" style="left:495px;top:290px;width:80px;height:15px"><div class="t" style="left:2px;top:2.4px;transform:scaleX(0.89);transform-origin:0 0">SEPALUMIC</div></div><div class="c" style="left:576px;top:290px;width:64px;height:15px"><div class="t" style="left:2px;top:2.4px;transform:scaleX(0.89);transform-origin:0 0">250300001</div></div><div class="c" style="left:641px;top:290px;width:48px;height:15px"><div class="t" style="left:2px;top:2.4px;transform:scaleX(0.89);transform-origin:0 0">002</div></div><div class="c" style="left:690px;top:290px;width:56px;height:15px"><div class="t" style="left:2px;top:2.4px;transform:scaleX(0.89);transform-origin:0 0">REC001</div></div><div class="c" style="left:747px;top:290px;width:112px;height:15px"><div class="t" style="left:2px;top:2.4px;transform:scaleX(0.89);transform-origin:0 0">17A0110_1001_1001</div></div><div class="c" style="left:860px;top:290px;width:264px;height:15px"><div class="t" style="left:2px;top:2.4px;transform:scaleX(0.89);transform-origin:0 0">Ouvrant fiche OV HI 28mm RAL : 1001 / 1001</div></div><div class="c" style="left:1125px;top:290px;width:80px;height:15px"><div class="t" style="left:0;width:80px;top:2.4px;text-align:center;transform:scaleX(0.89);transform-origin:50% 0">03/03/2025</div></div><div class="c" style="left:1206px;top:290px;width:80px;height:15px"><div class="t" style="right:1px;top:2.4px;transform:scaleX(0.89);transform-origin:100% 0">4,000000</div></div><div class="c" style="left:1287px;top:290px;width:48px;height:15px"><div class="t" style="left:2px;top:2.4px;transform:scaleX(0.89);transform-origin:0 0">BARRE</div></div><div class="c" style="left:1336px;top:290px;width:72px;height:15px"><div class="t" style="right:1px;top:2.4px;transform:scaleX(0.89);transform-origin:100% 0">4,000000</div></div><div class="c" style="left:1409px;top:290px;width:56px;height:15px"><div class="t" style="left:2px;top:2.4px;transform:scaleX(0.89);transform-origin:0 0">BARRE</div></div><div class="c" style="left:1466px;top:290px;width:72px;height:15px"><div class="t" style="right:1px;top:2.4px;transform:scaleX(0.89);transform-origin:100% 0">0,000000</div></div><div class="c" style="left:1539px;top:290px;width:80px;height:15px"><div class="t" style="right:1px;top:2.4px;transform:scaleX(0.89);transform-origin:100% 0">0,000000</div></div><div class="c" style="left:1620px;top:290px;width:48px;height:15px"><div class="t" style="left:2px;top:2.4px;transform:scaleX(0.89);transform-origin:0 0">EUR</div></div><div class="c" style="left:1669px;top:290px;width:72px;height:15px"><div class="t" style="right:1px;top:2.4px;transform:scaleX(0.89);transform-origin:100% 0">0,000000</div></div><div class="c" style="left:1742px;top:290px;width:56px;height:15px"><div class="t" style="left:2px;top:2.4px;transform:scaleX(0.89);transform-origin:0 0">EUR</div></div><svg class="a" style="left:1811px;top:290px" width="15" height="15"><rect x="0" y="0" width="15" height="15" fill="#fff"/><rect x="1.6" y="1.6" width="11.8" height="11.8" fill="#fff" stroke="#2a2a2a" stroke-width="1.25"/></svg><div class="c" style="left:422px;top:306px;width:72px;height:15px"><div class="t" style="left:2px;top:2.4px;transform:scaleX(0.89);transform-origin:0 0">Gen</div></div><div class="c" style="left:495px;top:306px;width:80px;height:15px"><div class="t" style="left:2px;top:2.4px;transform:scaleX(0.89);transform-origin:0 0">SEPALUMIC</div></div><div class="c" style="left:576px;top:306px;width:64px;height:15px"><div class="t" style="left:2px;top:2.4px;transform:scaleX(0.89);transform-origin:0 0">250300001</div></div><div class="c" style="left:641px;top:306px;width:48px;height:15px"><div class="t" style="left:2px;top:2.4px;transform:scaleX(0.89);transform-origin:0 0">003</div></div><div class="c" style="left:690px;top:306px;width:56px;height:15px"><div class="t" style="left:2px;top:2.4px;transform:scaleX(0.89);transform-origin:0 0">REC001</div></div><div class="c" style="left:747px;top:306px;width:112px;height:15px"><div class="t" style="left:2px;top:2.4px;transform:scaleX(0.89);transform-origin:0 0">17A0117_1001_1001</div></div><div class="c" style="left:860px;top:306px;width:264px;height:15px"><div class="t" style="left:2px;top:2.4px;transform:scaleX(0.89);transform-origin:0 0">Ouvrant fiche semi fixe OV HI 28mm RAL : 1001 / 10</div></div><div class="c" style="left:1125px;top:306px;width:80px;height:15px"><div class="t" style="left:0;width:80px;top:2.4px;text-align:center;transform:scaleX(0.89);transform-origin:50% 0">03/03/2025</div></div><div class="c" style="left:1206px;top:306px;width:80px;height:15px"><div class="t" style="right:1px;top:2.4px;transform:scaleX(0.89);transform-origin:100% 0">1,000000</div></div><div class="c" style="left:1287px;top:306px;width:48px;height:15px"><div class="t" style="left:2px;top:2.4px;transform:scaleX(0.89);transform-origin:0 0">BARRE</div></div><div class="c" style="left:1336px;top:306px;width:72px;height:15px"><div class="t" style="right:1px;top:2.4px;transform:scaleX(0.89);transform-origin:100% 0">1,000000</div></div><div class="c" style="left:1409px;top:306px;width:56px;height:15px"><div class="t" style="left:2px;top:2.4px;transform:scaleX(0.89);transform-origin:0 0">BARRE</div></div><div class="c" style="left:1466px;top:306px;width:72px;height:15px"><div class="t" style="right:1px;top:2.4px;transform:scaleX(0.89);transform-origin:100% 0">0,000000</div></div><div class="c" style="left:1539px;top:306px;width:80px;height:15px"><div class="t" style="right:1px;top:2.4px;transform:scaleX(0.89);transform-origin:100% 0">0,000000</div></div><div class="c" style="left:1620px;top:306px;width:48px;height:15px"><div class="t" style="left:2px;top:2.4px;transform:scaleX(0.89);transform-origin:0 0">EUR</div></div><div class="c" style="left:1669px;top:306px;width:72px;height:15px"><div class="t" style="right:1px;top:2.4px;transform:scaleX(0.89);transform-origin:100% 0">0,000000</div></div><div class="c" style="left:1742px;top:306px;width:56px;height:15px"><div class="t" style="left:2px;top:2.4px;transform:scaleX(0.89);transform-origin:0 0">EUR</div></div><svg class="a" style="left:1811px;top:306px" width="15" height="15"><rect x="0" y="0" width="15" height="15" fill="#fff"/><rect x="1.6" y="1.6" width="11.8" height="11.8" fill="#fff" stroke="#2a2a2a" stroke-width="1.25"/></svg><div class="c" style="left:422px;top:322px;width:72px;height:15px"><div class="t" style="left:2px;top:2.4px;transform:scaleX(0.89);transform-origin:0 0">Gen</div></div><div class="c" style="left:495px;top:322px;width:80px;height:15px"><div class="t" style="left:2px;top:2.4px;transform:scaleX(0.89);transform-origin:0 0">SEPALUMIC</div></div><div class="c" style="left:576px;top:322px;width:64px;height:15px"><div class="t" style="left:2px;top:2.4px;transform:scaleX(0.89);transform-origin:0 0">250300001</div></div><div class="c" style="left:641px;top:322px;width:48px;height:15px"><div class="t" style="left:2px;top:2.4px;transform:scaleX(0.89);transform-origin:0 0">004</div></div><div class="c" style="left:690px;top:322px;width:56px;height:15px"><div class="t" style="left:2px;top:2.4px;transform:scaleX(0.89);transform-origin:0 0">REC001</div></div><div class="c" style="left:747px;top:322px;width:112px;height:15px"><div class="t" style="left:2px;top:2.4px;transform:scaleX(0.89);transform-origin:0 0">FO40_1001</div></div><div class="c" style="left:860px;top:322px;width:264px;height:15px"><div class="t" style="left:2px;top:2.4px;transform:scaleX(0.89);transform-origin:0 0">Parclose pour vitrage 20 mm (RAL1001)</div></div><div class="c" style="left:1125px;top:322px;width:80px;height:15px"><div class="t" style="left:0;width:80px;top:2.4px;text-align:center;transform:scaleX(0.89);transform-origin:50% 0">03/03/2025</div></div><div class="c" style="left:1206px;top:322px;width:80px;height:15px"><div class="t" style="right:1px;top:2.4px;transform:scaleX(0.89);transform-origin:100% 0">4,000000</div></div><div class="c" style="left:1287px;top:322px;width:48px;height:15px"><div class="t" style="left:2px;top:2.4px;transform:scaleX(0.89);transform-origin:0 0">BARRE</div></div><div class="c" style="left:1336px;top:322px;width:72px;height:15px"><div class="t" style="right:1px;top:2.4px;transform:scaleX(0.89);transform-origin:100% 0">4,000000</div></div><div class="c" style="left:1409px;top:322px;width:56px;height:15px"><div class="t" style="left:2px;top:2.4px;transform:scaleX(0.89);transform-origin:0 0">BARRE</div></div><div class="c" style="left:1466px;top:322px;width:72px;height:15px"><div class="t" style="right:1px;top:2.4px;transform:scaleX(0.89);transform-origin:100% 0">0,000000</div></div><div class="c" style="left:1539px;top:322px;width:80px;height:15px"><div class="t" style="right:1px;top:2.4px;transform:scaleX(0.89);transform-origin:100% 0">0,000000</div></div><div class="c" style="left:1620px;top:322px;width:48px;height:15px"><div class="t" style="left:2px;top:2.4px;transform:scaleX(0.89);transform-origin:0 0">EUR</div></div><div class="c" style="left:1669px;top:322px;width:72px;height:15px"><div class="t" style="right:1px;top:2.4px;transform:scaleX(0.89);transform-origin:100% 0">0,000000</div></div><div class="c" style="left:1742px;top:322px;width:56px;height:15px"><div class="t" style="left:2px;top:2.4px;transform:scaleX(0.89);transform-origin:0 0">EUR</div></div><svg class="a" style="left:1811px;top:322px" width="15" height="15"><rect x="0" y="0" width="15" height="15" fill="#fff"/><rect x="1.6" y="1.6" width="11.8" height="11.8" fill="#fff" stroke="#2a2a2a" stroke-width="1.25"/></svg><div class="c" style="left:422px;top:338px;width:72px;height:15px"><div class="t" style="left:2px;top:2.4px;transform:scaleX(0.89);transform-origin:0 0">Gen</div></div><div class="c" style="left:495px;top:338px;width:80px;height:15px"><div class="t" style="left:2px;top:2.4px;transform:scaleX(0.89);transform-origin:0 0">SEPALUMIC</div></div><div class="c" style="left:576px;top:338px;width:64px;height:15px"><div class="t" style="left:2px;top:2.4px;transform:scaleX(0.89);transform-origin:0 0">250300004</div></div><div class="c" style="left:641px;top:338px;width:48px;height:15px"><div class="t" style="left:2px;top:2.4px;transform:scaleX(0.89);transform-origin:0 0">001</div></div><div class="c" style="left:690px;top:338px;width:56px;height:15px"><div class="t" style="left:2px;top:2.4px;transform:scaleX(0.89);transform-origin:0 0">REC001</div></div><div class="c" style="left:747px;top:338px;width:112px;height:15px"><div class="t" style="left:2px;top:2.4px;transform:scaleX(0.89);transform-origin:0 0">1010412_1001_1001</div></div><div class="c" style="left:860px;top:338px;width:264px;height:15px"><div class="t" style="left:2px;top:2.4px;transform:scaleX(0.89);transform-origin:0 0">Dormant DC HI OV avec BTC RAL : 1001 / 1001</div></div><div class="c" style="left:1125px;top:338px;width:80px;height:15px"><div class="t" style="left:0;width:80px;top:2.4px;text-align:center;transform:scaleX(0.89);transform-origin:50% 0">28/04/2025</div></div><div class="c" style="left:1206px;top:338px;width:80px;height:15px"><div class="t" style="right:1px;top:2.4px;transform:scaleX(0.89);transform-origin:100% 0">1,000000</div></div><div class="c" style="left:1287px;top:338px;width:48px;height:15px"><div class="t" style="left:2px;top:2.4px;transform:scaleX(0.89);transform-origin:0 0">BARRE</div></div><div class="c" style="left:1336px;top:338px;width:72px;height:15px"><div class="t" style="right:1px;top:2.4px;transform:scaleX(0.89);transform-origin:100% 0">1,000000</div></div><div class="c" style="left:1409px;top:338px;width:56px;height:15px"><div class="t" style="left:2px;top:2.4px;transform:scaleX(0.89);transform-origin:0 0">BARRE</div></div><div class="c" style="left:1466px;top:338px;width:72px;height:15px"><div class="t" style="right:1px;top:2.4px;transform:scaleX(0.89);transform-origin:100% 0">-10,000000</div></div><div class="c" style="left:1539px;top:338px;width:80px;height:15px"><div class="t" style="right:1px;top:2.4px;transform:scaleX(0.89);transform-origin:100% 0">-10,000000</div></div><div class="c" style="left:1620px;top:338px;width:48px;height:15px"><div class="t" style="left:2px;top:2.4px;transform:scaleX(0.89);transform-origin:0 0">EUR</div></div><div class="c" style="left:1669px;top:338px;width:72px;height:15px"><div class="t" style="right:1px;top:2.4px;transform:scaleX(0.89);transform-origin:100% 0">-10,000000</div></div><div class="c" style="left:1742px;top:338px;width:56px;height:15px"><div class="t" style="left:2px;top:2.4px;transform:scaleX(0.89);transform-origin:0 0">EUR</div></div><svg class="a" style="left:1811px;top:338px" width="15" height="15"><rect x="0" y="0" width="15" height="15" fill="#fff"/><rect x="1.6" y="1.6" width="11.8" height="11.8" fill="#fff" stroke="#2a2a2a" stroke-width="1.25"/></svg><div class="c" style="left:422px;top:354px;width:72px;height:15px"><div class="t" style="left:2px;top:2.4px;transform:scaleX(0.89);transform-origin:0 0">Gen</div></div><div class="c" style="left:495px;top:354px;width:80px;height:15px"><div class="t" style="left:2px;top:2.4px;transform:scaleX(0.89);transform-origin:0 0">SEPALUMIC</div></div><div class="c" style="left:576px;top:354px;width:64px;height:15px"><div class="t" style="left:2px;top:2.4px;transform:scaleX(0.89);transform-origin:0 0">250800001</div></div><div class="c" style="left:641px;top:354px;width:48px;height:15px"><div class="t" style="left:2px;top:2.4px;transform:scaleX(0.89);transform-origin:0 0">001</div></div><div class="c" style="left:690px;top:354px;width:56px;height:15px"><div class="t" style="left:2px;top:2.4px;transform:scaleX(0.89);transform-origin:0 0">REC001</div></div><div class="c" style="left:747px;top:354px;width:112px;height:15px"><div class="t" style="left:2px;top:2.4px;transform:scaleX(0.89);transform-origin:0 0">C250800021/01</div></div><div class="c" style="left:860px;top:354px;width:264px;height:15px"><div class="t" style="left:2px;top:2.4px;transform:scaleX(0.89);transform-origin:0 0">Jonction renforcée de 14 mm</div></div><div class="c" style="left:1125px;top:354px;width:80px;height:15px"><div class="t" style="left:0;width:80px;top:2.4px;text-align:center;transform:scaleX(0.89);transform-origin:50% 0">20/08/2025</div></div><div class="c" style="left:1206px;top:354px;width:80px;height:15px"><div class="t" style="right:1px;top:2.4px;transform:scaleX(0.89);transform-origin:100% 0">5,988024</div></div><div class="c" style="left:1287px;top:354px;width:48px;height:15px"><div class="t" style="left:2px;top:2.4px;transform:scaleX(0.89);transform-origin:0 0">m</div></div><div class="c" style="left:1336px;top:354px;width:72px;height:15px"><div class="t" style="right:1px;top:2.4px;transform:scaleX(0.89);transform-origin:100% 0">1,000000</div></div><div class="c" style="left:1409px;top:354px;width:56px;height:15px"><div class="t" style="left:2px;top:2.4px;transform:scaleX(0.89);transform-origin:0 0">BARRE</div></div><div class="c" style="left:1466px;top:354px;width:72px;height:15px"><div class="t" style="right:1px;top:2.4px;transform:scaleX(0.89);transform-origin:100% 0">0,000000</div></div><div class="c" style="left:1539px;top:354px;width:80px;height:15px"><div class="t" style="right:1px;top:2.4px;transform:scaleX(0.89);transform-origin:100% 0">0,000000</div></div><div class="c" style="left:1620px;top:354px;width:48px;height:15px"><div class="t" style="left:2px;top:2.4px;transform:scaleX(0.89);transform-origin:0 0">EUR</div></div><div class="c" style="left:1669px;top:354px;width:72px;height:15px"><div class="t" style="right:1px;top:2.4px;transform:scaleX(0.89);transform-origin:100% 0">0,000000</div></div><div class="c" style="left:1742px;top:354px;width:56px;height:15px"><div class="t" style="left:2px;top:2.4px;transform:scaleX(0.89);transform-origin:0 0">EUR</div></div><svg class="a" style="left:1811px;top:354px" width="15" height="15"><rect x="0" y="0" width="15" height="15" fill="#fff"/><rect x="1.6" y="1.6" width="11.8" height="11.8" fill="#fff" stroke="#2a2a2a" stroke-width="1.25"/></svg><div class="c" style="left:422px;top:370px;width:72px;height:15px"><div class="t" style="left:2px;top:2.4px;transform:scaleX(0.89);transform-origin:0 0">Gen</div></div><div class="c" style="left:495px;top:370px;width:80px;height:15px"><div class="t" style="left:2px;top:2.4px;transform:scaleX(0.89);transform-origin:0 0">SEPALUMIC</div></div><div class="c" style="left:576px;top:370px;width:64px;height:15px"><div class="t" style="left:2px;top:2.4px;transform:scaleX(0.89);transform-origin:0 0">251000002</div></div><div class="c" style="left:641px;top:370px;width:48px;height:15px"><div class="t" style="left:2px;top:2.4px;transform:scaleX(0.89);transform-origin:0 0">001</div></div><div class="c" style="left:690px;top:370px;width:56px;height:15px"><div class="t" style="left:2px;top:2.4px;transform:scaleX(0.89);transform-origin:0 0">REC001</div></div><div class="c" style="left:747px;top:370px;width:112px;height:15px"><div class="t" style="left:2px;top:2.4px;transform:scaleX(0.89);transform-origin:0 0">06500</div></div><div class="c" style="left:860px;top:370px;width:264px;height:15px"><div class="t" style="left:2px;top:2.4px;transform:scaleX(0.89);transform-origin:0 0">Joue 28 profil talon 95 sans patte dodécagone 4viS</div></div><div class="c" style="left:1125px;top:370px;width:80px;height:15px"><div class="t" style="left:0;width:80px;top:2.4px;text-align:center;transform:scaleX(0.89);transform-origin:50% 0">06/10/2025</div></div><div class="c" style="left:1206px;top:370px;width:80px;height:15px"><div class="t" style="right:1px;top:2.4px;transform:scaleX(0.89);transform-origin:100% 0">2,000000</div></div><div class="c" style="left:1287px;top:370px;width:48px;height:15px"><div class="t" style="left:2px;top:2.4px;transform:scaleX(0.89);transform-origin:0 0">Un</div></div><div class="c" style="left:1336px;top:370px;width:72px;height:15px"><div class="t" style="right:1px;top:2.4px;transform:scaleX(0.89);transform-origin:100% 0">2,000000</div></div><div class="c" style="left:1409px;top:370px;width:56px;height:15px"><div class="t" style="left:2px;top:2.4px;transform:scaleX(0.89);transform-origin:0 0">Un</div></div><div class="c" style="left:1466px;top:370px;width:72px;height:15px"><div class="t" style="right:1px;top:2.4px;transform:scaleX(0.89);transform-origin:100% 0">10,000000</div></div><div class="c" style="left:1539px;top:370px;width:80px;height:15px"><div class="t" style="right:1px;top:2.4px;transform:scaleX(0.89);transform-origin:100% 0">20,000000</div></div><div class="c" style="left:1620px;top:370px;width:48px;height:15px"><div class="t" style="left:2px;top:2.4px;transform:scaleX(0.89);transform-origin:0 0">EUR</div></div><div class="c" style="left:1669px;top:370px;width:72px;height:15px"><div class="t" style="right:1px;top:2.4px;transform:scaleX(0.89);transform-origin:100% 0">10,000000</div></div><div class="c" style="left:1742px;top:370px;width:56px;height:15px"><div class="t" style="left:2px;top:2.4px;transform:scaleX(0.89);transform-origin:0 0">EUR</div></div><svg class="a" style="left:1811px;top:370px" width="15" height="15"><rect x="0" y="0" width="15" height="15" fill="#fff"/><rect x="1.6" y="1.6" width="11.8" height="11.8" fill="#fff" stroke="#2a2a2a" stroke-width="1.25"/></svg><div class="c" style="left:422px;top:386px;width:72px;height:15px"><div class="t" style="left:2px;top:2.4px;transform:scaleX(0.89);transform-origin:0 0">Gen</div></div><div class="c" style="left:495px;top:386px;width:80px;height:15px"><div class="t" style="left:2px;top:2.4px;transform:scaleX(0.89);transform-origin:0 0">SEPALUMIC</div></div><div class="c" style="left:576px;top:386px;width:64px;height:15px"><div class="t" style="left:2px;top:2.4px;transform:scaleX(0.89);transform-origin:0 0">251000002</div></div><div class="c" style="left:641px;top:386px;width:48px;height:15px"><div class="t" style="left:2px;top:2.4px;transform:scaleX(0.89);transform-origin:0 0">002</div></div><div class="c" style="left:690px;top:386px;width:56px;height:15px"><div class="t" style="left:2px;top:2.4px;transform:scaleX(0.89);transform-origin:0 0">REC001</div></div><div class="c" style="left:747px;top:386px;width:112px;height:15px"><div class="t" style="left:2px;top:2.4px;transform:scaleX(0.89);transform-origin:0 0">1010144_7016_7016</div></div><div class="c" style="left:860px;top:386px;width:264px;height:15px"><div class="t" style="left:2px;top:2.4px;transform:scaleX(0.89);transform-origin:0 0">Jonction simple de 14 mm</div></div><div class="c" style="left:1125px;top:386px;width:80px;height:15px"><div class="t" style="left:0;width:80px;top:2.4px;text-align:center;transform:scaleX(0.89);transform-origin:50% 0">06/10/2025</div></div><div class="c" style="left:1206px;top:386px;width:80px;height:15px"><div class="t" style="right:1px;top:2.4px;transform:scaleX(0.89);transform-origin:100% 0">3,000000</div></div><div class="c" style="left:1287px;top:386px;width:48px;height:15px"><div class="t" style="left:2px;top:2.4px;transform:scaleX(0.89);transform-origin:0 0">m</div></div><div class="c" style="left:1336px;top:386px;width:72px;height:15px"><div class="t" style="right:1px;top:2.4px;transform:scaleX(0.89);transform-origin:100% 0">0,501000</div></div><div class="c" style="left:1409px;top:386px;width:56px;height:15px"><div class="t" style="left:2px;top:2.4px;transform:scaleX(0.89);transform-origin:0 0">BARRE</div></div><div class="c" style="left:1466px;top:386px;width:72px;height:15px"><div class="t" style="right:1px;top:2.4px;transform:scaleX(0.89);transform-origin:100% 0">9,000000</div></div><div class="c" style="left:1539px;top:386px;width:80px;height:15px"><div class="t" style="right:1px;top:2.4px;transform:scaleX(0.89);transform-origin:100% 0">27,000000</div></div><div class="c" style="left:1620px;top:386px;width:48px;height:15px"><div class="t" style="left:2px;top:2.4px;transform:scaleX(0.89);transform-origin:0 0">EUR</div></div><div class="c" style="left:1669px;top:386px;width:72px;height:15px"><div class="t" style="right:1px;top:2.4px;transform:scaleX(0.89);transform-origin:100% 0">9,000000</div></div><div class="c" style="left:1742px;top:386px;width:56px;height:15px"><div class="t" style="left:2px;top:2.4px;transform:scaleX(0.89);transform-origin:0 0">EUR</div></div><svg class="a" style="left:1811px;top:386px" width="15" height="15"><rect x="0" y="0" width="15" height="15" fill="#fff"/><rect x="1.6" y="1.6" width="11.8" height="11.8" fill="#fff" stroke="#2a2a2a" stroke-width="1.25"/></svg><div class="c" style="left:422px;top:402px;width:72px;height:15px"><div class="t" style="left:2px;top:2.4px;transform:scaleX(0.89);transform-origin:0 0">Gen</div></div><div class="c" style="left:495px;top:402px;width:80px;height:15px"><div class="t" style="left:2px;top:2.4px;transform:scaleX(0.89);transform-origin:0 0">SOVERISOVI</div></div><div class="c" style="left:576px;top:402px;width:64px;height:15px"><div class="t" style="left:2px;top:2.4px;transform:scaleX(0.89);transform-origin:0 0">250300003</div></div><div class="c" style="left:641px;top:402px;width:48px;height:15px"><div class="t" style="left:2px;top:2.4px;transform:scaleX(0.89);transform-origin:0 0">001</div></div><div class="c" style="left:690px;top:402px;width:56px;height:15px"><div class="t" style="left:2px;top:2.4px;transform:scaleX(0.89);transform-origin:0 0">REC001</div></div><div class="c" style="left:747px;top:402px;width:112px;height:15px"><div class="t" style="left:2px;top:2.4px;transform:scaleX(0.89);transform-origin:0 0">C250200001/01/1</div></div><div class="c" style="left:860px;top:402px;width:264px;height:15px"><div class="t" style="left:2px;top:2.4px;transform:scaleX(0.89);transform-origin:0 0">Vitrage : H x L : 1326 x 462 Type : 4FE-20-4</div></div><div class="c" style="left:1125px;top:402px;width:80px;height:15px"><div class="t" style="left:0;width:80px;top:2.4px;text-align:center;transform:scaleX(0.89);transform-origin:50% 0">03/03/2025</div></div><div class="c" style="left:1206px;top:402px;width:80px;height:15px"><div class="t" style="right:1px;top:2.4px;transform:scaleX(0.89);transform-origin:100% 0">1,000000</div></div><div class="c" style="left:1287px;top:402px;width:48px;height:15px"><div class="t" style="left:2px;top:2.4px;transform:scaleX(0.89);transform-origin:0 0">Un</div></div><div class="c" style="left:1336px;top:402px;width:72px;height:15px"><div class="t" style="right:1px;top:2.4px;transform:scaleX(0.89);transform-origin:100% 0">1,000000</div></div><div class="c" style="left:1409px;top:402px;width:56px;height:15px"><div class="t" style="left:2px;top:2.4px;transform:scaleX(0.89);transform-origin:0 0">UN</div></div><div class="c" style="left:1466px;top:402px;width:72px;height:15px"><div class="t" style="right:1px;top:2.4px;transform:scaleX(0.89);transform-origin:100% 0">0,310000</div></div><div class="c" style="left:1539px;top:402px;width:80px;height:15px"><div class="t" style="right:1px;top:2.4px;transform:scaleX(0.89);transform-origin:100% 0">0,310000</div></div><div class="c" style="left:1620px;top:402px;width:48px;height:15px"><div class="t" style="left:2px;top:2.4px;transform:scaleX(0.89);transform-origin:0 0">EUR</div></div><div class="c" style="left:1669px;top:402px;width:72px;height:15px"><div class="t" style="right:1px;top:2.4px;transform:scaleX(0.89);transform-origin:100% 0">0,310000</div></div><div class="c" style="left:1742px;top:402px;width:56px;height:15px"><div class="t" style="left:2px;top:2.4px;transform:scaleX(0.89);transform-origin:0 0">EUR</div></div><svg class="a" style="left:1811px;top:402px" width="15" height="15"><rect x="0" y="0" width="15" height="15" fill="#fff"/><rect x="1.6" y="1.6" width="11.8" height="11.8" fill="#fff" stroke="#2a2a2a" stroke-width="1.25"/><path d="M3 7.3 L6 10.3 L11.8 4.1" stroke="#2a2a2a" stroke-width="1.5" fill="none"/></svg><div class="c" style="left:422px;top:418px;width:72px;height:15px"><div class="t" style="left:2px;top:2.4px;transform:scaleX(0.89);transform-origin:0 0">Gen</div></div><div class="c" style="left:495px;top:418px;width:80px;height:15px"><div class="t" style="left:2px;top:2.4px;transform:scaleX(0.89);transform-origin:0 0">SOVERISOVI</div></div><div class="c" style="left:576px;top:418px;width:64px;height:15px"><div class="t" style="left:2px;top:2.4px;transform:scaleX(0.89);transform-origin:0 0">250300003</div></div><div class="c" style="left:641px;top:418px;width:48px;height:15px"><div class="t" style="left:2px;top:2.4px;transform:scaleX(0.89);transform-origin:0 0">002</div></div><div class="c" style="left:690px;top:418px;width:56px;height:15px"><div class="t" style="left:2px;top:2.4px;transform:scaleX(0.89);transform-origin:0 0">REC001</div></div><div class="c" style="left:747px;top:418px;width:112px;height:15px"><div class="t" style="left:2px;top:2.4px;transform:scaleX(0.89);transform-origin:0 0">C250200001/01/2</div></div><div class="c" style="left:860px;top:418px;width:264px;height:15px"><div class="t" style="left:2px;top:2.4px;transform:scaleX(0.89);transform-origin:0 0">Vitrage : H x L : 1326 x 462 Type : 4FE-20-4</div></div><div class="c" style="left:1125px;top:418px;width:80px;height:15px"><div class="t" style="left:0;width:80px;top:2.4px;text-align:center;transform:scaleX(0.89);transform-origin:50% 0">03/03/2025</div></div><div class="c" style="left:1206px;top:418px;width:80px;height:15px"><div class="t" style="right:1px;top:2.4px;transform:scaleX(0.89);transform-origin:100% 0">1,000000</div></div><div class="c" style="left:1287px;top:418px;width:48px;height:15px"><div class="t" style="left:2px;top:2.4px;transform:scaleX(0.89);transform-origin:0 0">Un</div></div><div class="c" style="left:1336px;top:418px;width:72px;height:15px"><div class="t" style="right:1px;top:2.4px;transform:scaleX(0.89);transform-origin:100% 0">1,000000</div></div><div class="c" style="left:1409px;top:418px;width:56px;height:15px"><div class="t" style="left:2px;top:2.4px;transform:scaleX(0.89);transform-origin:0 0">UN</div></div><div class="c" style="left:1466px;top:418px;width:72px;height:15px"><div class="t" style="right:1px;top:2.4px;transform:scaleX(0.89);transform-origin:100% 0">0,310000</div></div><div class="c" style="left:1539px;top:418px;width:80px;height:15px"><div class="t" style="right:1px;top:2.4px;transform:scaleX(0.89);transform-origin:100% 0">0,310000</div></div><div class="c" style="left:1620px;top:418px;width:48px;height:15px"><div class="t" style="left:2px;top:2.4px;transform:scaleX(0.89);transform-origin:0 0">EUR</div></div><div class="c" style="left:1669px;top:418px;width:72px;height:15px"><div class="t" style="right:1px;top:2.4px;transform:scaleX(0.89);transform-origin:100% 0">0,310000</div></div><div class="c" style="left:1742px;top:418px;width:56px;height:15px"><div class="t" style="left:2px;top:2.4px;transform:scaleX(0.89);transform-origin:0 0">EUR</div></div><svg class="a" style="left:1811px;top:418px" width="15" height="15"><rect x="0" y="0" width="15" height="15" fill="#fff"/><rect x="1.6" y="1.6" width="11.8" height="11.8" fill="#fff" stroke="#2a2a2a" stroke-width="1.25"/><path d="M3 7.3 L6 10.3 L11.8 4.1" stroke="#2a2a2a" stroke-width="1.5" fill="none"/></svg><div class="c" style="left:422px;top:434px;width:72px;height:15px"><div class="t" style="left:2px;top:2.4px;transform:scaleX(0.89);transform-origin:0 0">Gen</div></div><div class="c" style="left:495px;top:434px;width:80px;height:15px"><div class="t" style="left:2px;top:2.4px;transform:scaleX(0.89);transform-origin:0 0">SOVERISOVI</div></div><div class="c" style="left:576px;top:434px;width:64px;height:15px"><div class="t" style="left:2px;top:2.4px;transform:scaleX(0.89);transform-origin:0 0">250300003</div></div><div class="c" style="left:641px;top:434px;width:48px;height:15px"><div class="t" style="left:2px;top:2.4px;transform:scaleX(0.89);transform-origin:0 0">003</div></div><div class="c" style="left:690px;top:434px;width:56px;height:15px"><div class="t" style="left:2px;top:2.4px;transform:scaleX(0.89);transform-origin:0 0">REC001</div></div><div class="c" style="left:747px;top:434px;width:112px;height:15px"><div class="t" style="left:2px;top:2.4px;transform:scaleX(0.89);transform-origin:0 0">C250200001/02/1</div></div><div class="c" style="left:860px;top:434px;width:264px;height:15px"><div class="t" style="left:2px;top:2.4px;transform:scaleX(0.89);transform-origin:0 0">Vitrage : H x L : 1426 x 462 Type : 4FE-20-4</div></div><div class="c" style="left:1125px;top:434px;width:80px;height:15px"><div class="t" style="left:0;width:80px;top:2.4px;text-align:center;transform:scaleX(0.89);transform-origin:50% 0">03/03/2025</div></div><div class="c" style="left:1206px;top:434px;width:80px;height:15px"><div class="t" style="right:1px;top:2.4px;transform:scaleX(0.89);transform-origin:100% 0">2,000000</div></div><div class="c" style="left:1287px;top:434px;width:48px;height:15px"><div class="t" style="left:2px;top:2.4px;transform:scaleX(0.89);transform-origin:0 0">Un</div></div><div class="c" style="left:1336px;top:434px;width:72px;height:15px"><div class="t" style="right:1px;top:2.4px;transform:scaleX(0.89);transform-origin:100% 0">2,000000</div></div><div class="c" style="left:1409px;top:434px;width:56px;height:15px"><div class="t" style="left:2px;top:2.4px;transform:scaleX(0.89);transform-origin:0 0">UN</div></div><div class="c" style="left:1466px;top:434px;width:72px;height:15px"><div class="t" style="right:1px;top:2.4px;transform:scaleX(0.89);transform-origin:100% 0">0,330000</div></div><div class="c" style="left:1539px;top:434px;width:80px;height:15px"><div class="t" style="right:1px;top:2.4px;transform:scaleX(0.89);transform-origin:100% 0">0,660000</div></div><div class="c" style="left:1620px;top:434px;width:48px;height:15px"><div class="t" style="left:2px;top:2.4px;transform:scaleX(0.89);transform-origin:0 0">EUR</div></div><div class="c" style="left:1669px;top:434px;width:72px;height:15px"><div class="t" style="right:1px;top:2.4px;transform:scaleX(0.89);transform-origin:100% 0">0,330000</div></div><div class="c" style="left:1742px;top:434px;width:56px;height:15px"><div class="t" style="left:2px;top:2.4px;transform:scaleX(0.89);transform-origin:0 0">EUR</div></div><svg class="a" style="left:1811px;top:434px" width="15" height="15"><rect x="0" y="0" width="15" height="15" fill="#fff"/><rect x="1.6" y="1.6" width="11.8" height="11.8" fill="#fff" stroke="#2a2a2a" stroke-width="1.25"/><path d="M3 7.3 L6 10.3 L11.8 4.1" stroke="#2a2a2a" stroke-width="1.5" fill="none"/></svg><div class="c" style="left:422px;top:450px;width:72px;height:15px"><div class="t" style="left:2px;top:2.4px;transform:scaleX(0.89);transform-origin:0 0">Gen</div></div><div class="c" style="left:495px;top:450px;width:80px;height:15px"><div class="t" style="left:2px;top:2.4px;transform:scaleX(0.89);transform-origin:0 0">SOVERISOVI</div></div><div class="c" style="left:576px;top:450px;width:64px;height:15px"><div class="t" style="left:2px;top:2.4px;transform:scaleX(0.89);transform-origin:0 0">250300003</div></div><div class="c" style="left:641px;top:450px;width:48px;height:15px"><div class="t" style="left:2px;top:2.4px;transform:scaleX(0.89);transform-origin:0 0">004</div></div><div class="c" style="left:690px;top:450px;width:56px;height:15px"><div class="t" style="left:2px;top:2.4px;transform:scaleX(0.89);transform-origin:0 0">REC001</div></div><div class="c" style="left:747px;top:450px;width:112px;height:15px"><div class="t" style="left:2px;top:2.4px;transform:scaleX(0.89);transform-origin:0 0">C250200001/02/2</div></div><div class="c" style="left:860px;top:450px;width:264px;height:15px"><div class="t" style="left:2px;top:2.4px;transform:scaleX(0.89);transform-origin:0 0">Vitrage : H x L : 1426 x 462 Type : 4FE-20-4</div></div><div class="c" style="left:1125px;top:450px;width:80px;height:15px"><div class="t" style="left:0;width:80px;top:2.4px;text-align:center;transform:scaleX(0.89);transform-origin:50% 0">03/03/2025</div></div><div class="c" style="left:1206px;top:450px;width:80px;height:15px"><div class="t" style="right:1px;top:2.4px;transform:scaleX(0.89);transform-origin:100% 0">2,000000</div></div><div class="c" style="left:1287px;top:450px;width:48px;height:15px"><div class="t" style="left:2px;top:2.4px;transform:scaleX(0.89);transform-origin:0 0">Un</div></div><div class="c" style="left:1336px;top:450px;width:72px;height:15px"><div class="t" style="right:1px;top:2.4px;transform:scaleX(0.89);transform-origin:100% 0">2,000000</div></div><div class="c" style="left:1409px;top:450px;width:56px;height:15px"><div class="t" style="left:2px;top:2.4px;transform:scaleX(0.89);transform-origin:0 0">UN</div></div><div class="c" style="left:1466px;top:450px;width:72px;height:15px"><div class="t" style="right:1px;top:2.4px;transform:scaleX(0.89);transform-origin:100% 0">0,330000</div></div><div class="c" style="left:1539px;top:450px;width:80px;height:15px"><div class="t" style="right:1px;top:2.4px;transform:scaleX(0.89);transform-origin:100% 0">0,660000</div></div><div class="c" style="left:1620px;top:450px;width:48px;height:15px"><div class="t" style="left:2px;top:2.4px;transform:scaleX(0.89);transform-origin:0 0">EUR</div></div><div class="c" style="left:1669px;top:450px;width:72px;height:15px"><div class="t" style="right:1px;top:2.4px;transform:scaleX(0.89);transform-origin:100% 0">0,330000</div></div><div class="c" style="left:1742px;top:450px;width:56px;height:15px"><div class="t" style="left:2px;top:2.4px;transform:scaleX(0.89);transform-origin:0 0">EUR</div></div><svg class="a" style="left:1811px;top:450px" width="15" height="15"><rect x="0" y="0" width="15" height="15" fill="#fff"/><rect x="1.6" y="1.6" width="11.8" height="11.8" fill="#fff" stroke="#2a2a2a" stroke-width="1.25"/><path d="M3 7.3 L6 10.3 L11.8 4.1" stroke="#2a2a2a" stroke-width="1.5" fill="none"/></svg><div class="c" style="left:422px;top:466px;width:72px;height:15px"><div class="t" style="left:2px;top:2.4px;transform:scaleX(0.89);transform-origin:0 0">Gen</div></div><div class="c" style="left:495px;top:466px;width:80px;height:15px"><div class="t" style="left:2px;top:2.4px;transform:scaleX(0.89);transform-origin:0 0">SOVERISOVI</div></div><div class="c" style="left:576px;top:466px;width:64px;height:15px"><div class="t" style="left:2px;top:2.4px;transform:scaleX(0.89);transform-origin:0 0">250300003</div></div><div class="c" style="left:641px;top:466px;width:48px;height:15px"><div class="t" style="left:2px;top:2.4px;transform:scaleX(0.89);transform-origin:0 0">005</div></div><div class="c" style="left:690px;top:466px;width:56px;height:15px"><div class="t" style="left:2px;top:2.4px;transform:scaleX(0.89);transform-origin:0 0">REC001</div></div><div class="c" style="left:747px;top:466px;width:112px;height:15px"><div class="t" style="left:2px;top:2.4px;transform:scaleX(0.89);transform-origin:0 0">C250200001/03/1</div></div><div class="c" style="left:860px;top:466px;width:264px;height:15px"><div class="t" style="left:2px;top:2.4px;transform:scaleX(0.89);transform-origin:0 0">Vitrage : H x L : 1026 x 826 Type : 4FE-20-4</div></div><div class="c" style="left:1125px;top:466px;width:80px;height:15px"><div class="t" style="left:0;width:80px;top:2.4px;text-align:center;transform:scaleX(0.89);transform-origin:50% 0">03/03/2025</div></div><div class="c" style="left:1206px;top:466px;width:80px;height:15px"><div class="t" style="right:1px;top:2.4px;transform:scaleX(0.89);transform-origin:100% 0">1,000000</div></div><div class="c" style="left:1287px;top:466px;width:48px;height:15px"><div class="t" style="left:2px;top:2.4px;transform:scaleX(0.89);transform-origin:0 0">Un</div></div><div class="c" style="left:1336px;top:466px;width:72px;height:15px"><div class="t" style="right:1px;top:2.4px;transform:scaleX(0.89);transform-origin:100% 0">1,000000</div></div><div class="c" style="left:1409px;top:466px;width:56px;height:15px"><div class="t" style="left:2px;top:2.4px;transform:scaleX(0.89);transform-origin:0 0">UN</div></div><div class="c" style="left:1466px;top:466px;width:72px;height:15px"><div class="t" style="right:1px;top:2.4px;transform:scaleX(0.89);transform-origin:100% 0">0,420000</div></div><div class="c" style="left:1539px;top:466px;width:80px;height:15px"><div class="t" style="right:1px;top:2.4px;transform:scaleX(0.89);transform-origin:100% 0">0,420000</div></div><div class="c" style="left:1620px;top:466px;width:48px;height:15px"><div class="t" style="left:2px;top:2.4px;transform:scaleX(0.89);transform-origin:0 0">EUR</div></div><div class="c" style="left:1669px;top:466px;width:72px;height:15px"><div class="t" style="right:1px;top:2.4px;transform:scaleX(0.89);transform-origin:100% 0">0,420000</div></div><div class="c" style="left:1742px;top:466px;width:56px;height:15px"><div class="t" style="left:2px;top:2.4px;transform:scaleX(0.89);transform-origin:0 0">EUR</div></div><svg class="a" style="left:1811px;top:466px" width="15" height="15"><rect x="0" y="0" width="15" height="15" fill="#fff"/><rect x="1.6" y="1.6" width="11.8" height="11.8" fill="#fff" stroke="#2a2a2a" stroke-width="1.25"/><path d="M3 7.3 L6 10.3 L11.8 4.1" stroke="#2a2a2a" stroke-width="1.5" fill="none"/></svg><div class="c" style="left:422px;top:482px;width:72px;height:15px"><div class="t" style="left:2px;top:2.4px;transform:scaleX(0.89);transform-origin:0 0">Gen</div></div><div class="c" style="left:495px;top:482px;width:80px;height:15px"><div class="t" style="left:2px;top:2.4px;transform:scaleX(0.89);transform-origin:0 0">SOVERISOVI</div></div><div class="c" style="left:576px;top:482px;width:64px;height:15px"><div class="t" style="left:2px;top:2.4px;transform:scaleX(0.89);transform-origin:0 0">250800002</div></div><div class="c" style="left:641px;top:482px;width:48px;height:15px"><div class="t" style="left:2px;top:2.4px;transform:scaleX(0.89);transform-origin:0 0">001</div></div><div class="c" style="left:690px;top:482px;width:56px;height:15px"><div class="t" style="left:2px;top:2.4px;transform:scaleX(0.89);transform-origin:0 0">REC001</div></div><div class="c" style="left:747px;top:482px;width:112px;height:15px"><div class="t" style="left:2px;top:2.4px;transform:scaleX(0.89);transform-origin:0 0">C250800021/02/1</div></div><div class="c" style="left:860px;top:482px;width:264px;height:15px"><div class="t" style="left:2px;top:2.4px;transform:scaleX(0.89);transform-origin:0 0">Vitrage : H x L : 1026 x 676 Type : 4FE-20-4</div></div><div class="c" style="left:1125px;top:482px;width:80px;height:15px"><div class="t" style="left:0;width:80px;top:2.4px;text-align:center;transform:scaleX(0.89);transform-origin:50% 0">20/08/2025</div></div><div class="c" style="left:1206px;top:482px;width:80px;height:15px"><div class="t" style="right:1px;top:2.4px;transform:scaleX(0.89);transform-origin:100% 0">1,000000</div></div><div class="c" style="left:1287px;top:482px;width:48px;height:15px"><div class="t" style="left:2px;top:2.4px;transform:scaleX(0.89);transform-origin:0 0">Un</div></div><div class="c" style="left:1336px;top:482px;width:72px;height:15px"><div class="t" style="right:1px;top:2.4px;transform:scaleX(0.89);transform-origin:100% 0">1,000000</div></div><div class="c" style="left:1409px;top:482px;width:56px;height:15px"><div class="t" style="left:2px;top:2.4px;transform:scaleX(0.89);transform-origin:0 0">UN</div></div><div class="c" style="left:1466px;top:482px;width:72px;height:15px"><div class="t" style="right:1px;top:2.4px;transform:scaleX(0.89);transform-origin:100% 0">0,350000</div></div><div class="c" style="left:1539px;top:482px;width:80px;height:15px"><div class="t" style="right:1px;top:2.4px;transform:scaleX(0.89);transform-origin:100% 0">0,350000</div></div><div class="c" style="left:1620px;top:482px;width:48px;height:15px"><div class="t" style="left:2px;top:2.4px;transform:scaleX(0.89);transform-origin:0 0">EUR</div></div><div class="c" style="left:1669px;top:482px;width:72px;height:15px"><div class="t" style="right:1px;top:2.4px;transform:scaleX(0.89);transform-origin:100% 0">0,350000</div></div><div class="c" style="left:1742px;top:482px;width:56px;height:15px"><div class="t" style="left:2px;top:2.4px;transform:scaleX(0.89);transform-origin:0 0">EUR</div></div><svg class="a" style="left:1811px;top:482px" width="15" height="15"><rect x="0" y="0" width="15" height="15" fill="#fff"/><rect x="1.6" y="1.6" width="11.8" height="11.8" fill="#fff" stroke="#2a2a2a" stroke-width="1.25"/></svg><div class="c" style="left:422px;top:498px;width:72px;height:15px"><div class="t" style="left:2px;top:2.4px;transform:scaleX(0.89);transform-origin:0 0">Gen</div></div><div class="c" style="left:495px;top:498px;width:80px;height:15px"><div class="t" style="left:2px;top:2.4px;transform:scaleX(0.89);transform-origin:0 0">STIC</div></div><div class="c" style="left:576px;top:498px;width:64px;height:15px"><div class="t" style="left:2px;top:2.4px;transform:scaleX(0.89);transform-origin:0 0">251000005</div></div><div class="c" style="left:641px;top:498px;width:48px;height:15px"><div class="t" style="left:2px;top:2.4px;transform:scaleX(0.89);transform-origin:0 0">001</div></div><div class="c" style="left:690px;top:498px;width:56px;height:15px"><div class="t" style="left:2px;top:2.4px;transform:scaleX(0.89);transform-origin:0 0">REC001</div></div><div class="c" style="left:747px;top:498px;width:112px;height:15px"><div class="t" style="left:2px;top:2.4px;transform:scaleX(0.89);transform-origin:0 0">06500</div></div><div class="c" style="left:860px;top:498px;width:264px;height:15px"><div class="t" style="left:2px;top:2.4px;transform:scaleX(0.89);transform-origin:0 0">Joue 28 profil talon 95 sans patte dodécagone 4viS</div></div><div class="c" style="left:1125px;top:498px;width:80px;height:15px"><div class="t" style="left:0;width:80px;top:2.4px;text-align:center;transform:scaleX(0.89);transform-origin:50% 0">08/10/2025</div></div><div class="c" style="left:1206px;top:498px;width:80px;height:15px"><div class="t" style="right:1px;top:2.4px;transform:scaleX(0.89);transform-origin:100% 0">10,000000</div></div><div class="c" style="left:1287px;top:498px;width:48px;height:15px"><div class="t" style="left:2px;top:2.4px;transform:scaleX(0.89);transform-origin:0 0">Un</div></div><div class="c" style="left:1336px;top:498px;width:72px;height:15px"><div class="t" style="right:1px;top:2.4px;transform:scaleX(0.89);transform-origin:100% 0">10,000000</div></div><div class="c" style="left:1409px;top:498px;width:56px;height:15px"><div class="t" style="left:2px;top:2.4px;transform:scaleX(0.89);transform-origin:0 0">Un</div></div><div class="c" style="left:1466px;top:498px;width:72px;height:15px"><div class="t" style="right:1px;top:2.4px;transform:scaleX(0.89);transform-origin:100% 0">10,900000</div></div><div class="c" style="left:1539px;top:498px;width:80px;height:15px"><div class="t" style="right:1px;top:2.4px;transform:scaleX(0.89);transform-origin:100% 0">109,000000</div></div><div class="c" style="left:1620px;top:498px;width:48px;height:15px"><div class="t" style="left:2px;top:2.4px;transform:scaleX(0.89);transform-origin:0 0">EUR</div></div><div class="c" style="left:1669px;top:498px;width:72px;height:15px"><div class="t" style="right:1px;top:2.4px;transform:scaleX(0.89);transform-origin:100% 0">10,900000</div></div><div class="c" style="left:1742px;top:498px;width:56px;height:15px"><div class="t" style="left:2px;top:2.4px;transform:scaleX(0.89);transform-origin:0 0">EUR</div></div><svg class="a" style="left:1811px;top:498px" width="15" height="15"><rect x="0" y="0" width="15" height="15" fill="#f6f6a0"/><rect x="1.6" y="1.6" width="11.8" height="11.8" fill="#ffff66" stroke="#2a2a2a" stroke-width="1.25"/></svg><div class="a" style="left:574px;top:496px;width:68px;height:17px;border:2px solid #111"></div><div class="a" style="left:0;top:0;width:41px;height:514px;background:#1997a0"></div><div class="a" style="left:40px;top:0;width:1px;height:38px;background:#148b94"></div><div class="a" style="left:40px;top:79px;width:1px;height:435px;background:#148b94"></div><div class="a" style="left:0;top:0;width:1px;height:514px;background:#5ea9ae"></div><div class="a" style="left:0;top:37px;width:41px;height:1px;background:#148b94"></div><div class="a" style="left:0;top:38px;width:41px;height:41px;background:#fff"></div><div class="a" style="left:0;top:38px;width:1px;height:41px;background:#e8ecee"></div><div class="a" style="left:0;top:79px;width:41px;height:1px;background:#148b94"></div><div class="a" style="left:0;top:203px;width:41px;height:2px;background:#c2e2e4"></div><svg class="a" style="left:14px;top:11px" width="15" height="14"><path d="M7.7 2 L2.9 6.7 L7.7 11.4 M11.8 2 L7.1 6.7 L11.9 11.4" stroke="#d3cdd2" stroke-width="1.5" fill="none" stroke-linecap="round"/></svg><svg class="a" style="left:10px;top:47.2px" width="22" height="22"><polygon points="11.00,3.80 16.09,5.91 18.20,11.00 16.09,16.09 11.00,18.20 5.91,16.09 3.80,11.00 5.91,5.91" stroke="#1997a0" stroke-width="2.5" fill="none" stroke-linejoin="round"/><line x1="11" y1="11" x2="18.00" y2="11.00" stroke="#1997a0" stroke-width="1.5"/><line x1="11" y1="11" x2="15.95" y2="15.95" stroke="#1997a0" stroke-width="1.5"/><line x1="11" y1="11" x2="11.00" y2="18.00" stroke="#1997a0" stroke-width="1.5"/><line x1="11" y1="11" x2="6.05" y2="15.95" stroke="#1997a0" stroke-width="1.5"/><line x1="11" y1="11" x2="4.00" y2="11.00" stroke="#1997a0" stroke-width="1.5"/><line x1="11" y1="11" x2="6.05" y2="6.05" stroke="#1997a0" stroke-width="1.5"/><line x1="11" y1="11" x2="11.00" y2="4.00" stroke="#1997a0" stroke-width="1.5"/><line x1="11" y1="11" x2="15.95" y2="6.05" stroke="#1997a0" stroke-width="1.5"/><circle cx="19.90" cy="11.00" r="1.35" fill="#1997a0"/><circle cx="17.29" cy="17.29" r="1.35" fill="#1997a0"/><circle cx="11.00" cy="19.90" r="1.35" fill="#1997a0"/><circle cx="4.71" cy="17.29" r="1.35" fill="#1997a0"/><circle cx="2.10" cy="11.00" r="1.35" fill="#1997a0"/><circle cx="4.71" cy="4.71" r="1.35" fill="#1997a0"/><circle cx="11.00" cy="2.10" r="1.35" fill="#1997a0"/><circle cx="17.29" cy="4.71" r="1.35" fill="#1997a0"/><circle cx="11" cy="11" r="2.5" fill="#1997a0"/><circle cx="11" cy="11" r="1" fill="#fff"/></svg><svg class="a" style="left:10px;top:89px" width="22" height="21"><path d="M11 1.2 L13.9 7.3 L20.4 8 L15.5 12.4 L16.9 18.9 L11 15.6 L5.1 18.9 L6.5 12.4 L1.6 8 L8.1 7.3 Z" fill="#fff" stroke="#fff" stroke-width="1.2" stroke-linejoin="round"/></svg><svg class="a" style="left:10px;top:130px" width="23" height="22"><rect x="1.8" y="1.8" width="18.8" height="12.6" rx="1" fill="none" stroke="#fff" stroke-width="2.3"/><path d="M11.2 15 L11.2 18.5 M6.5 19.3 L16 19.3" stroke="#fff" stroke-width="2"/></svg><svg class="a" style="left:10px;top:170px" width="22" height="22"><circle cx="8.5" cy="8.5" r="6" fill="none" stroke="#fff" stroke-width="2.6"/><path d="M13 13 L19.5 19.5" stroke="#fff" stroke-width="2.8" stroke-linecap="round"/></svg><div class="a" style="left:52.5px;top:10px;font:bold 12.1px/14px 'Liberation Sans',sans-serif;color:#2197a6;white-space:pre">Navigateur DIAPASON</div><div class="a" style="left:42px;top:226px;width:339px;height:164px;background:#e9edf2"></div><div class="a" style="left:42px;top:273px;width:339px;height:23px;background:#c9d3de"></div><div class="a" style="left:76px;top:226px;width:88px;height:21px;background:#e9ef5b"></div><div class="a" style="left:381px;top:233px;width:1px;height:25px;background:#cfd6de"></div><div class="nav" style="left:81.6px;top:43.10px">Favoris</div><div class="a" style="left:63px;top:42.50px;line-height:0"><svg width="16" height="16"><path d="M8 0.6 L10.4 5.4 L15.5 6 L11.7 9.6 L12.8 14.8 L8 12.2 L3.2 14.8 L4.3 9.6 L0.5 6 L5.6 5.4 Z" fill="#fdb515" stroke="#fdb515" stroke-width="0.8" stroke-linejoin="round"/></svg></div><svg class="a" style="left:47.5px;top:45.50px" width="7" height="9"><path d="M1 0.8 L4.8 4.3 L1 7.8" stroke="#3d466a" stroke-width="1.3" fill="none"/></svg><div class="nav" style="left:81.6px;top:66.57px">Relation Clients</div><div class="a" style="left:65px;top:65.97px;line-height:0"><svg width="14" height="15"><rect x="0.8" y="2.5" width="12" height="11.6" rx="1.5" fill="#3d4052"/><rect x="2.9" y="0.5" width="1.8" height="3" fill="#3d4052"/><rect x="8.9" y="0.5" width="1.8" height="3" fill="#3d4052"/><g fill="#fff"><rect x="2.2" y="5.9" width="2.5" height="2.1"/><rect x="5.5" y="5.9" width="2.5" height="2.1"/><rect x="8.8" y="5.9" width="2.5" height="2.1"/><rect x="2.2" y="8.9" width="2.5" height="2.1"/><rect x="5.5" y="8.9" width="2.5" height="2.1"/><rect x="8.8" y="8.9" width="2.5" height="2.1"/><rect x="2.2" y="11.6" width="2.5" height="2.1"/><rect x="5.5" y="11.6" width="2.5" height="2.1"/><rect x="8.8" y="11.6" width="2.5" height="2.1"/></g></svg></div><svg class="a" style="left:47.5px;top:68.97px" width="7" height="9"><path d="M1 0.8 L4.8 4.3 L1 7.8" stroke="#3d466a" stroke-width="1.3" fill="none"/></svg><div class="nav" style="left:81.6px;top:90.04px">Gestion Commerciale</div><div class="a" style="left:64px;top:90.44px;line-height:0"><svg width="15" height="14"><rect x="0.5" y="3" width="13.5" height="10" rx="1.5" fill="#3d4052"/><rect x="4.5" y="0.5" width="5.5" height="3" rx="1" fill="none" stroke="#3d4052" stroke-width="1.2"/><path d="M3.2 3 V13 M11.3 3 V13" stroke="#fff" stroke-width="0.9"/></svg></div><svg class="a" style="left:47.5px;top:92.44px" width="7" height="9"><path d="M1 0.8 L4.8 4.3 L1 7.8" stroke="#3d466a" stroke-width="1.3" fill="none"/></svg><div class="nav" style="left:81.6px;top:113.51px">Facturation Client</div><div class="a" style="left:66px;top:113.41px;line-height:0"><svg width="12" height="15"><rect x="0.4" y="0.4" width="10.4" height="13.8" rx="1.8" fill="#3d4052"/><g fill="#fff"><rect x="2.1" y="2.2" width="6.8" height="2"/><rect x="2.1" y="5.5" width="1.9" height="1.8"/><rect x="4.55" y="5.5" width="1.9" height="1.8"/><rect x="7.0" y="5.5" width="1.9" height="1.8"/><rect x="2.1" y="8.2" width="1.9" height="1.8"/><rect x="4.55" y="8.2" width="1.9" height="1.8"/><rect x="7.0" y="8.2" width="1.9" height="1.8"/><rect x="2.1" y="10.9" width="1.9" height="1.8"/><rect x="4.55" y="10.9" width="1.9" height="1.8"/><rect x="7.0" y="10.9" width="1.9" height="1.8"/></g></svg></div><svg class="a" style="left:47.5px;top:115.91px" width="7" height="9"><path d="M1 0.8 L4.8 4.3 L1 7.8" stroke="#3d466a" stroke-width="1.3" fill="none"/></svg><div class="nav" style="left:81.6px;top:136.98px">Stocks</div><div class="a" style="left:62.5px;top:134.88px;line-height:0"><svg width="18" height="16"><path d="M4.6 5.2 Q6.8 1.6 9.4 4.2 Q11.6 6.4 13.2 2.4" stroke="#3d4052" stroke-width="1.7" fill="none" stroke-linecap="round"/><path d="M1 8.2 L7.6 6.6 L8.6 9.6 L1.8 10.8 Z M17 8.2 L10.4 6.6 L9.4 9.6 L16.2 10.8 Z" fill="#3d4052" stroke="#3d4052" stroke-width="0.6" stroke-linejoin="round"/><path d="M2.6 11.6 L7.6 11.2 L9 9.8 L10.4 11.2 L15.4 11.6 L15 14.2 Q9 16.2 3 14.2 Z" fill="#3d4052"/></svg></div><svg class="a" style="left:47.5px;top:139.38px" width="7" height="9"><path d="M1 0.8 L4.8 4.3 L1 7.8" stroke="#3d466a" stroke-width="1.3" fill="none"/></svg><div class="nav" style="left:81.6px;top:160.45px">Achats</div><div class="a" style="left:63px;top:161.15px;line-height:0"><svg width="18" height="13"><g fill="#3d4052"><circle cx="8.5" cy="1.4" r="1.25"/><path d="M6 7 Q6.6 3.1 8.5 3.1 Q10.4 3.1 11 7 Z"/><circle cx="4" cy="3.7" r="1.15"/><path d="M0.9 9.3 Q1.6 5.3 4 5.3 Q6.4 5.3 7.1 9.3 Z"/><circle cx="13" cy="3.7" r="1.15"/><path d="M9.9 9.3 Q10.6 5.3 13 5.3 Q15.4 5.3 16.1 9.3 Z"/><rect x="0.5" y="10.3" width="16.5" height="1.7" rx="0.8"/></g></svg></div><svg class="a" style="left:47.5px;top:162.85px" width="7" height="9"><path d="M1 0.8 L4.8 4.3 L1 7.8" stroke="#3d466a" stroke-width="1.3" fill="none"/></svg><div class="nav" style="left:81.6px;top:183.92px">Approvisionnements</div><div class="a" style="left:63px;top:184.62px;line-height:0"><svg width="18" height="13"><g fill="#3d4052"><circle cx="8.5" cy="1.4" r="1.25"/><path d="M6 7 Q6.6 3.1 8.5 3.1 Q10.4 3.1 11 7 Z"/><circle cx="4" cy="3.7" r="1.15"/><path d="M0.9 9.3 Q1.6 5.3 4 5.3 Q6.4 5.3 7.1 9.3 Z"/><circle cx="13" cy="3.7" r="1.15"/><path d="M9.9 9.3 Q10.6 5.3 13 5.3 Q15.4 5.3 16.1 9.3 Z"/><rect x="0.5" y="10.3" width="16.5" height="1.7" rx="0.8"/></g></svg></div><svg class="a" style="left:47.5px;top:186.32px" width="7" height="9"><path d="M1 0.8 L4.8 4.3 L1 7.8" stroke="#3d466a" stroke-width="1.3" fill="none"/></svg><div class="nav" style="left:81.6px;top:207.39px">Facturation Fournisseur</div><div class="a" style="left:66px;top:207.29px;line-height:0"><svg width="12" height="15"><rect x="0.4" y="0.4" width="10.4" height="13.8" rx="1.8" fill="#3d4052"/><g fill="#fff"><rect x="2.1" y="2.2" width="6.8" height="2"/><rect x="2.1" y="5.5" width="1.9" height="1.8"/><rect x="4.55" y="5.5" width="1.9" height="1.8"/><rect x="7.0" y="5.5" width="1.9" height="1.8"/><rect x="2.1" y="8.2" width="1.9" height="1.8"/><rect x="4.55" y="8.2" width="1.9" height="1.8"/><rect x="7.0" y="8.2" width="1.9" height="1.8"/><rect x="2.1" y="10.9" width="1.9" height="1.8"/><rect x="4.55" y="10.9" width="1.9" height="1.8"/><rect x="7.0" y="10.9" width="1.9" height="1.8"/></g></svg></div><svg class="a" style="left:47px;top:211.29px" width="9" height="6"><path d="M0.8 0.8 L4.2 4.2 L7.6 0.8" stroke="#3d466a" stroke-width="1.3" fill="none"/></svg><div class="nav" style="left:100.9px;top:230.86px">Provisions</div><div class="a" style="left:83.5px;top:231.26px;line-height:0"><svg width="15" height="13"><path d="M1.3 0.5 V11.7 H13.8" stroke="#3d4052" stroke-width="1.8" fill="none" stroke-linecap="round"/><path d="M3.8 8.5 L6.8 4.8 L9 7 L13 2.5" stroke="#3d4052" stroke-width="1.7" fill="none" stroke-linejoin="round"/></svg></div><div class="nav" style="left:100.9px;top:254.33px">Pré Facture en Erreur de Création</div><div class="a" style="left:83.2px;top:254.43px;line-height:0"><svg width="15" height="15"><path d="M3.2 0.6 H13.6 V11 Q13.6 14 10.6 14 H0.5 V3.6 Q0.5 0.6 3.2 0.6 Z" fill="#44454f"/><path d="M3 6.8 Q7 9.6 11 6.8" stroke="#fff" stroke-width="1.7" fill="none" stroke-linecap="round"/></svg></div><div class="nav" style="left:100.9px;top:277.80px">Pré Facture en Attente de Création</div><div class="a" style="left:83.2px;top:277.90px;line-height:0"><svg width="15" height="15"><path d="M3.2 0.6 H13.6 V11 Q13.6 14 10.6 14 H0.5 V3.6 Q0.5 0.6 3.2 0.6 Z" fill="#44454f"/><path d="M3 6.8 Q7 9.6 11 6.8" stroke="#fff" stroke-width="1.7" fill="none" stroke-linecap="round"/></svg></div><div class="nav" style="left:100.9px;top:301.27px">Enregistrement des factures</div><div class="a" style="left:84px;top:300.67px;line-height:0"><svg width="14" height="15"><path d="M3 1 H11.5 A1 1 0 0 1 12.5 2 V13.5 A1 1 0 0 1 11.5 14.5 H1.5 A1 1 0 0 1 0.5 13.5 V6 H3 Z" fill="#3d4052"/><rect x="4.5" y="2.5" width="6.5" height="2" fill="#fff"/><g fill="#fff"><rect x="7" y="6" width="1.4" height="1.4"/><rect x="10" y="6" width="1.4" height="1.4"/><rect x="10" y="9" width="1.4" height="1.4"/><rect x="10" y="12" width="1.4" height="1.4"/></g><path d="M6 8 A2.6 2.6 0 1 0 6 12.5" stroke="#fff" stroke-width="1.1" fill="none"/></svg></div><div class="nav" style="left:100.9px;top:324.74px">Factures en Erreur de Rapprochement Auto</div><div class="a" style="left:84px;top:324.14px;line-height:0"><svg width="14" height="15"><path d="M3 1 H11.5 A1 1 0 0 1 12.5 2 V13.5 A1 1 0 0 1 11.5 14.5 H1.5 A1 1 0 0 1 0.5 13.5 V6 H3 Z" fill="#3d4052"/><rect x="4.5" y="2.5" width="6.5" height="2" fill="#fff"/><g fill="#fff"><rect x="7" y="6" width="1.4" height="1.4"/><rect x="10" y="6" width="1.4" height="1.4"/><rect x="10" y="9" width="1.4" height="1.4"/><rect x="10" y="12" width="1.4" height="1.4"/></g><path d="M6 8 A2.6 2.6 0 1 0 6 12.5" stroke="#fff" stroke-width="1.1" fill="none"/></svg></div><div class="nav" style="left:100.9px;top:348.21px">Factures Rapprochées non Confirmées Compta</div><div class="a" style="left:84px;top:347.61px;line-height:0"><svg width="14" height="15"><path d="M3 1 H11.5 A1 1 0 0 1 12.5 2 V13.5 A1 1 0 0 1 11.5 14.5 H1.5 A1 1 0 0 1 0.5 13.5 V6 H3 Z" fill="#3d4052"/><rect x="4.5" y="2.5" width="6.5" height="2" fill="#fff"/><g fill="#fff"><rect x="7" y="6" width="1.4" height="1.4"/><rect x="10" y="6" width="1.4" height="1.4"/><rect x="10" y="9" width="1.4" height="1.4"/><rect x="10" y="12" width="1.4" height="1.4"/></g><path d="M6 8 A2.6 2.6 0 1 0 6 12.5" stroke="#fff" stroke-width="1.1" fill="none"/></svg></div><div class="nav" style="left:100.9px;top:371.68px">Factures Confirmées Compta</div><div class="a" style="left:84px;top:371.08px;line-height:0"><svg width="14" height="15"><path d="M3 1 H11.5 A1 1 0 0 1 12.5 2 V13.5 A1 1 0 0 1 11.5 14.5 H1.5 A1 1 0 0 1 0.5 13.5 V6 H3 Z" fill="#3d4052"/><rect x="4.5" y="2.5" width="6.5" height="2" fill="#fff"/><g fill="#fff"><rect x="7" y="6" width="1.4" height="1.4"/><rect x="10" y="6" width="1.4" height="1.4"/><rect x="10" y="9" width="1.4" height="1.4"/><rect x="10" y="12" width="1.4" height="1.4"/></g><path d="M6 8 A2.6 2.6 0 1 0 6 12.5" stroke="#fff" stroke-width="1.1" fill="none"/></svg></div><div class="nav" style="left:81.6px;top:395.15px">Retours fournisseurs</div><div class="a" style="left:63px;top:395.55px;line-height:0"><svg width="17" height="14"><path d="M5.5 1 L0.9 5 L5.5 9" stroke="#3d4052" stroke-width="1.4" fill="none"/><path d="M3.6 5 L8.4 0.6 L8.4 9.4 Z M8 2.8 Q15.6 2.6 15.6 8.6 Q15.4 11 13 12.4 Q13.8 7 8 7.2 Z" fill="#3d4052"/></svg></div><svg class="a" style="left:47.5px;top:397.55px" width="7" height="9"><path d="M1 0.8 L4.8 4.3 L1 7.8" stroke="#3d466a" stroke-width="1.3" fill="none"/></svg><div class="nav" style="left:81.6px;top:418.62px">Production</div><div class="a" style="left:63px;top:418.02px;line-height:0"><svg width="16" height="15"><path d="M1.6 12.6 L8 6.3" stroke="#3d4052" stroke-width="2.6" stroke-linecap="round"/><path d="M5.5 2.2 Q8.6 -0.6 12 2 L15.2 5.2 L13.6 7.6 L11.5 6.2 L9.5 8.3 L6.4 5.2 L8.2 3.6 Q7.1 2.7 5.5 2.2 Z" fill="#3d4052"/></svg></div><svg class="a" style="left:47.5px;top:421.02px" width="7" height="9"><path d="M1 0.8 L4.8 4.3 L1 7.8" stroke="#3d466a" stroke-width="1.3" fill="none"/></svg><div class="nav" style="left:81.6px;top:442.09px">Expéditions</div><div class="a" style="left:63px;top:444.79px;line-height:0"><svg width="18" height="11"><path d="M0.5 5.6 H12.5" stroke="#3d4052" stroke-width="1.5"/><circle cx="2.6" cy="7.5" r="1.7" fill="none" stroke="#3d4052" stroke-width="1.3"/><circle cx="5.8" cy="7.5" r="1.7" fill="none" stroke="#3d4052" stroke-width="1.3"/><path d="M11.8 0.8 H15 Q17.2 1.4 17.2 5 V8 Q17 9.6 15 9.6 H11.8 Z" fill="#3d4052"/><rect x="13" y="2" width="2.2" height="2.2" fill="#fff"/><circle cx="14.3" cy="7.6" r="0.9" fill="#fff"/></svg></div><svg class="a" style="left:47.5px;top:444.49px" width="7" height="9"><path d="M1 0.8 L4.8 4.3 L1 7.8" stroke="#3d466a" stroke-width="1.3" fill="none"/></svg><div class="nav" style="left:81.6px;top:465.56px">Conditionnements</div><div class="a" style="left:63px;top:468.26px;line-height:0"><svg width="18" height="11"><path d="M0.5 5.6 H12.5" stroke="#3d4052" stroke-width="1.5"/><circle cx="2.6" cy="7.5" r="1.7" fill="none" stroke="#3d4052" stroke-width="1.3"/><circle cx="5.8" cy="7.5" r="1.7" fill="none" stroke="#3d4052" stroke-width="1.3"/><path d="M11.8 0.8 H15 Q17.2 1.4 17.2 5 V8 Q17 9.6 15 9.6 H11.8 Z" fill="#3d4052"/><rect x="13" y="2" width="2.2" height="2.2" fill="#fff"/><circle cx="14.3" cy="7.6" r="0.9" fill="#fff"/></svg></div><svg class="a" style="left:47.5px;top:467.96px" width="7" height="9"><path d="M1 0.8 L4.8 4.3 L1 7.8" stroke="#3d466a" stroke-width="1.3" fill="none"/></svg><div class="nav" style="left:81.6px;top:489.03px">Pose</div><div class="a" style="left:63.2px;top:489.93px;line-height:0"><svg width="16" height="13"><path d="M1.8 8 Q1.8 3.6 4.8 1.9 L6.3 4 L6.5 0.6 H9 L9.2 4 L10.7 1.9 Q13.7 3.6 13.7 8 Z" fill="#3d4052"/><path d="M0.4 9.3 H15.1 Q14.6 11.6 11.6 11.6 H3.9 Q0.9 11.6 0.4 9.3 Z" fill="#3d4052"/></svg></div><svg class="a" style="left:47.5px;top:491.43px" width="7" height="9"><path d="M1 0.8 L4.8 4.3 L1 7.8" stroke="#3d466a" stroke-width="1.3" fill="none"/></svg><svg class="a" style="left:382px;top:421px" width="4" height="4"><path d="M1 3.2 L3.2 1" stroke="#2f6fd8" stroke-width="1.1"/></svg><svg class="a" style="left:382px;top:425px" width="4" height="4"><path d="M1 3.2 L3.2 1" stroke="#2f6fd8" stroke-width="1.1"/></svg><svg class="a" style="left:382px;top:429px" width="4" height="4"><path d="M1 3.2 L3.2 1" stroke="#2f6fd8" stroke-width="1.1"/></svg><svg class="a" style="left:382px;top:433px" width="4" height="4"><path d="M1 3.2 L3.2 1" stroke="#2f6fd8" stroke-width="1.1"/></svg><svg class="a" style="left:382px;top:437px" width="4" height="4"><path d="M1 3.2 L3.2 1" stroke="#2f6fd8" stroke-width="1.1"/></svg><div class="a" style="left:390px;top:2px;width:32px;height:22px;background:#ffffff;border-radius:6px 6px 0 0"></div><svg class="a" style="left:399px;top:6px" width="15" height="14"><path d="M7.5 1 L14.2 7 L12 7 L12 13 L9 13 L9 9.5 L6 9.5 L6 13 L3 13 L3 7 L0.8 7 Z" fill="#3d4052" stroke="#3d4052" stroke-width="0.8" stroke-linejoin="round"/></svg><div class="a" style="left:427px;top:2px;width:192px;height:22px;background:#fdfefe;border-radius:6px 6px 0 0"></div><div class="a" style="left:431px;top:9px;line-height:0"><svg width="13" height="13"><path d="M3 0.5 H11 A1 1 0 0 1 12 1.5 V12 A1 1 0 0 1 11 13 H1.5 A1 1 0 0 1 0.5 12 V5 H3 Z" fill="#3d4052"/><rect x="4.5" y="2" width="6" height="2" fill="#fff"/><g fill="#fff"><rect x="7" y="5.5" width="1.3" height="1.3"/><rect x="9.5" y="5.5" width="1.3" height="1.3"/><rect x="9.5" y="8.2" width="1.3" height="1.3"/><rect x="9.5" y="10.8" width="1.3" height="1.3"/></g><path d="M5.8 7.2 A2.3 2.3 0 1 0 5.8 11.3" stroke="#fff" stroke-width="1" fill="none"/></svg></div><div class="a" style="left:448.8px;top:6px;font:12.5px/16px 'Liberation Sans',sans-serif;letter-spacing:0.39px;color:#3b3f5c;white-space:pre">Enregistrement factures</div><svg class="a" style="left:603px;top:10px" width="10" height="9"><path d="M1 0.8 L8.8 8.2 M8.8 0.8 L1 8.2" stroke="#3b3f52" stroke-width="1.6"/></svg><div class="a" style="left:622px;top:1px;width:116px;height:24px;background:#1997a0;border-radius:7px 7px 0 0"></div><svg class="a" style="left:625.5px;top:8.5px" width="13" height="12"><path d="M1.2 0.5 V10.6 H12.5" stroke="#f4f1e8" stroke-width="1.6" fill="none"/><path d="M3.5 7.5 L6 4.3 L8 6.3 L11.6 2.2" stroke="#f4f1e8" stroke-width="1.5" fill="none" stroke-linejoin="round"/></svg><div class="a" style="left:643.7px;top:6px;font:12.5px/16px 'Liberation Sans',sans-serif;color:#fbf8ee;white-space:pre">Provisions</div><svg class="a" style="left:721.5px;top:10px" width="10" height="9"><path d="M1 0.8 L8.6 8.2 M8.6 0.8 L1 8.2" stroke="#f4f4f4" stroke-width="1.6"/></svg></body></html>
